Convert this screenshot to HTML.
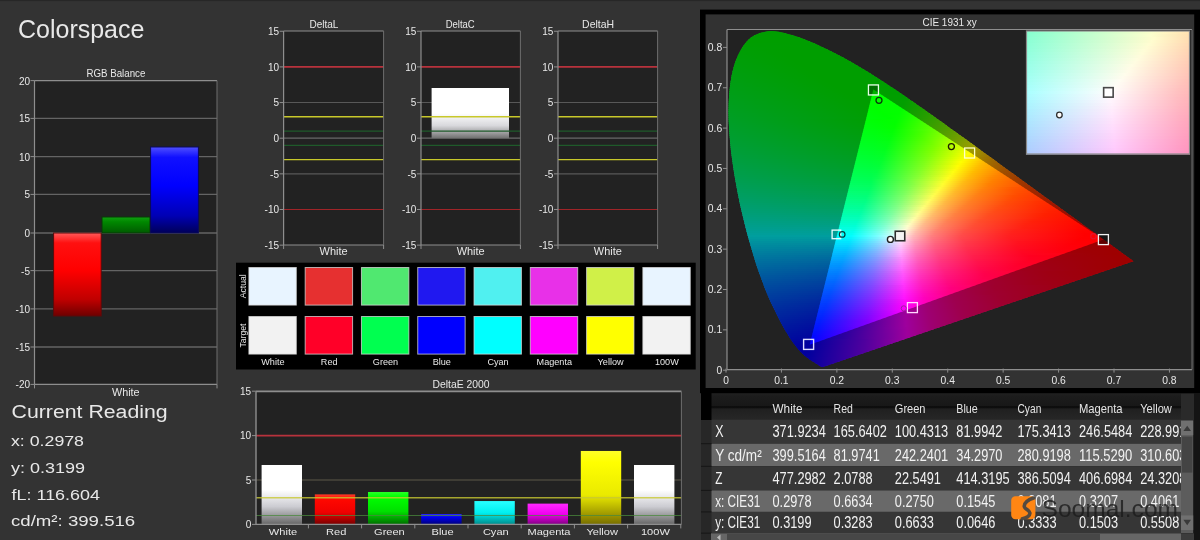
<!DOCTYPE html><html><head><meta charset="utf-8"><title>Colorspace</title><style>html,body{margin:0;padding:0;background:#333;overflow:hidden}svg{display:block;will-change:transform}text{font-family:"Liberation Sans", sans-serif}</style></head><body><svg width="1200" height="540" viewBox="0 0 1200 540"><defs><linearGradient id="gR" x1="0" y1="0" x2="0" y2="1"><stop offset="0" stop-color="#ff5a5a"/><stop offset="0.12" stop-color="#ff1010"/><stop offset="0.45" stop-color="#ff0000"/><stop offset="0.8" stop-color="#c00000"/><stop offset="1" stop-color="#6e0000"/></linearGradient>
<linearGradient id="gG" x1="0" y1="0" x2="0" y2="1"><stop offset="0" stop-color="#10a010"/><stop offset="0.3" stop-color="#008800"/><stop offset="1" stop-color="#005a00"/></linearGradient>
<linearGradient id="gB" x1="0" y1="0" x2="0" y2="1"><stop offset="0" stop-color="#5050ff"/><stop offset="0.12" stop-color="#1010ff"/><stop offset="0.45" stop-color="#0000ff"/><stop offset="0.8" stop-color="#0000b4"/><stop offset="1" stop-color="#000058"/></linearGradient>
<linearGradient id="gW1" x1="0" y1="0" x2="0" y2="1"><stop offset="0" stop-color="#ffffff"/><stop offset="0.5" stop-color="#ffffff"/><stop offset="0.75" stop-color="#d8d8dc"/><stop offset="1" stop-color="#707070"/></linearGradient>
<linearGradient id="gE0" x1="0" y1="0" x2="0" y2="1"><stop offset="0" stop-color="#fff"/><stop offset="0.42" stop-color="#fff"/><stop offset="0.7" stop-color="#ccccd2"/><stop offset="1" stop-color="#666"/></linearGradient>
<linearGradient id="gE1" x1="0" y1="0" x2="0" y2="1"><stop offset="0" stop-color="#ff3c28"/><stop offset="0.15" stop-color="#ff0800"/><stop offset="0.6" stop-color="#f00000"/><stop offset="1" stop-color="#780000"/></linearGradient>
<linearGradient id="gE2" x1="0" y1="0" x2="0" y2="1"><stop offset="0" stop-color="#28ff28"/><stop offset="0.15" stop-color="#00ff00"/><stop offset="0.6" stop-color="#00e000"/><stop offset="1" stop-color="#006e00"/></linearGradient>
<linearGradient id="gE3" x1="0" y1="0" x2="0" y2="1"><stop offset="0" stop-color="#2828ff"/><stop offset="0.3" stop-color="#0000f0"/><stop offset="1" stop-color="#000078"/></linearGradient>
<linearGradient id="gE4" x1="0" y1="0" x2="0" y2="1"><stop offset="0" stop-color="#28ffff"/><stop offset="0.5" stop-color="#00f0f0"/><stop offset="1" stop-color="#008c8c"/></linearGradient>
<linearGradient id="gE5" x1="0" y1="0" x2="0" y2="1"><stop offset="0" stop-color="#ff28ff"/><stop offset="0.5" stop-color="#f000f0"/><stop offset="1" stop-color="#820082"/></linearGradient>
<linearGradient id="gE6" x1="0" y1="0" x2="0" y2="1"><stop offset="0" stop-color="#ffff28"/><stop offset="0.15" stop-color="#ffff00"/><stop offset="0.6" stop-color="#eaea00"/><stop offset="1" stop-color="#786e00"/></linearGradient>
<linearGradient id="gE7" x1="0" y1="0" x2="0" y2="1"><stop offset="0" stop-color="#fff"/><stop offset="0.42" stop-color="#fff"/><stop offset="0.7" stop-color="#ccccd2"/><stop offset="1" stop-color="#666"/></linearGradient>
<clipPath id="cpH"><polygon points="823.0,367.0 822.2,367.1 821.4,366.9 820.6,366.5 819.8,366.0 819.0,365.5 818.4,365.1 817.7,364.6 816.8,364.0 816.2,363.6 815.5,363.2 814.7,362.7 813.8,362.1 812.9,361.5 811.9,360.9 810.8,360.2 809.6,359.4 809.0,359.0 808.4,358.5 807.7,358.0 807.1,357.5 806.3,357.0 805.6,356.4 804.9,355.8 804.1,355.2 803.4,354.5 802.5,353.7 801.6,352.8 800.7,351.9 799.7,350.8 798.7,349.7 797.6,348.5 796.5,347.1 795.3,345.6 794.1,344.0 792.8,342.3 791.5,340.4 790.2,338.4 788.8,336.3 787.3,333.8 785.7,331.2 784.1,328.5 782.5,325.5 780.8,322.4 779.0,319.0 777.1,315.3 775.2,311.3 773.1,307.1 771.0,302.7 768.9,298.0 766.7,293.0 764.6,287.7 762.5,282.1 760.3,276.1 758.1,269.9 755.9,263.4 753.8,256.6 751.7,249.5 749.6,242.2 747.4,234.5 745.3,226.5 743.3,218.3 741.3,210.1 739.5,201.9 737.8,193.5 736.2,185.0 734.7,176.4 733.3,167.8 732.1,159.3 731.0,150.9 730.2,142.8 729.5,134.6 729.0,126.6 728.6,118.8 728.5,111.1 728.7,103.8 729.0,96.7 729.6,89.8 730.4,83.1 731.4,76.7 732.7,70.7 734.2,65.2 736.0,60.0 738.0,55.2 740.3,50.8 742.7,46.8 745.3,43.2 748.1,40.1 751.0,37.6 754.1,35.6 757.4,34.0 760.8,32.8 764.2,31.9 767.7,31.3 771.2,31.1 774.9,31.3 778.6,31.8 782.3,32.5 786.1,33.4 789.8,34.4 793.6,35.4 797.3,36.7 801.1,38.1 804.9,39.6 808.6,41.1 812.3,42.6 815.9,44.1 819.5,45.7 823.0,47.4 826.5,49.0 830.0,50.7 833.5,52.5 836.9,54.2 840.3,56.0 843.7,57.8 847.1,59.7 850.4,61.6 853.8,63.5 857.2,65.5 860.5,67.4 863.9,69.5 867.2,71.5 870.6,73.6 873.9,75.7 877.2,77.8 880.5,79.9 883.8,82.1 887.1,84.2 890.4,86.4 893.7,88.6 897.0,90.8 900.3,93.1 903.6,95.3 906.9,97.6 910.2,99.9 913.5,102.1 916.8,104.4 920.1,106.8 923.5,109.1 926.8,111.4 930.1,113.7 933.4,116.1 936.7,118.4 940.0,120.8 943.3,123.1 946.6,125.5 949.8,127.9 953.1,130.2 956.4,132.6 959.7,134.9 963.0,137.3 966.2,139.6 969.5,142.0 972.8,144.3 976.0,146.7 979.2,149.0 982.4,151.4 985.6,153.7 988.8,156.0 992.0,158.3 995.2,160.6 998.3,162.9 1001.4,165.2 1004.5,167.4 1007.6,169.7 1010.7,171.9 1013.7,174.1 1016.7,176.3 1019.8,178.5 1022.7,180.7 1025.7,182.8 1028.6,185.0 1031.5,187.1 1034.3,189.1 1037.2,191.2 1040.0,193.2 1042.7,195.2 1045.4,197.2 1048.1,199.1 1050.8,201.1 1053.3,203.0 1055.9,204.8 1058.4,206.6 1060.8,208.4 1063.2,210.1 1065.5,211.8 1067.7,213.4 1069.9,215.0 1072.1,216.6 1074.2,218.1 1076.2,219.6 1078.3,221.1 1080.3,222.6 1082.2,224.0 1084.1,225.4 1085.9,226.7 1087.7,228.0 1089.4,229.2 1091.0,230.4 1092.6,231.5 1094.2,232.6 1095.7,233.7 1097.1,234.8 1098.5,235.8 1099.9,236.8 1101.2,237.7 1102.4,238.6 1103.6,239.5 1104.8,240.4 1105.9,241.2 1107.0,242.0 1108.0,242.7 1109.0,243.4 1109.9,244.1 1110.9,244.8 1111.8,245.5 1112.6,246.1 1113.4,246.7 1114.2,247.2 1115.0,247.8 1115.7,248.3 1116.4,248.8 1117.1,249.3 1117.8,249.8 1118.4,250.3 1119.0,250.7 1119.6,251.2 1120.2,251.6 1121.4,252.4 1122.4,253.2 1123.4,253.9 1124.3,254.6 1125.2,255.2 1126.0,255.8 1126.7,256.3 1127.4,256.8 1128.2,257.4 1129.1,258.0 1129.8,258.5 1130.5,259.1 1131.3,259.6 1132.0,260.2 1132.6,260.6 1133.4,261.2"/></clipPath>
<clipPath id="cpT"><polygon points="1103.6,239.4 873.4,89.6 809.7,344.7"/></clipPath>
<linearGradient id="c0" gradientUnits="userSpaceOnUse" x1="759" x2="786" y1="0" y2="0"><stop offset="0" stop-color="#0f0"/><stop offset="1" stop-color="#0f0"/></linearGradient>
<linearGradient id="c1" gradientUnits="userSpaceOnUse" x1="754" x2="793" y1="0" y2="0"><stop offset="0" stop-color="#0f0"/><stop offset="1" stop-color="#0f0"/></linearGradient>
<linearGradient id="c2" gradientUnits="userSpaceOnUse" x1="750" x2="800" y1="0" y2="0"><stop offset="0" stop-color="#0f0"/><stop offset="1" stop-color="#0f0"/></linearGradient>
<linearGradient id="c3" gradientUnits="userSpaceOnUse" x1="748" x2="805" y1="0" y2="0"><stop offset="0" stop-color="#0f0"/><stop offset="1" stop-color="#0f0"/></linearGradient>
<linearGradient id="c4" gradientUnits="userSpaceOnUse" x1="746" x2="810" y1="0" y2="0"><stop offset="0" stop-color="#0f0"/><stop offset="1" stop-color="#0f0"/></linearGradient>
<linearGradient id="c5" gradientUnits="userSpaceOnUse" x1="744" x2="815" y1="0" y2="0"><stop offset="0" stop-color="#00ff01"/><stop offset="1" stop-color="#0f0"/></linearGradient>
<linearGradient id="c6" gradientUnits="userSpaceOnUse" x1="743" x2="819" y1="0" y2="0"><stop offset="0" stop-color="#00ff03"/><stop offset="1" stop-color="#0f0"/></linearGradient>
<linearGradient id="c7" gradientUnits="userSpaceOnUse" x1="741" x2="824" y1="0" y2="0"><stop offset="0" stop-color="#00ff04"/><stop offset="1" stop-color="#0f0"/></linearGradient>
<linearGradient id="c8" gradientUnits="userSpaceOnUse" x1="740" x2="828" y1="0" y2="0"><stop offset="0" stop-color="#00ff06"/><stop offset="0.705" stop-color="#0f0"/><stop offset="1" stop-color="#0f0"/></linearGradient>
<linearGradient id="c9" gradientUnits="userSpaceOnUse" x1="739" x2="832" y1="0" y2="0"><stop offset="0" stop-color="#00ff07"/><stop offset="0.548" stop-color="#0f0"/><stop offset="1" stop-color="#0f0"/></linearGradient>
<linearGradient id="c10" gradientUnits="userSpaceOnUse" x1="738" x2="836" y1="0" y2="0"><stop offset="0" stop-color="#00ff09"/><stop offset="0.52" stop-color="#0f0"/><stop offset="1" stop-color="#0f0"/></linearGradient>
<linearGradient id="c11" gradientUnits="userSpaceOnUse" x1="737" x2="840" y1="0" y2="0"><stop offset="0" stop-color="#00ff0a"/><stop offset="0.515" stop-color="#0f0"/><stop offset="1" stop-color="#0f0"/></linearGradient>
<linearGradient id="c12" gradientUnits="userSpaceOnUse" x1="736" x2="844" y1="0" y2="0"><stop offset="0" stop-color="#00ff0c"/><stop offset="0.509" stop-color="#0f0"/><stop offset="1" stop-color="#0f0"/></linearGradient>
<linearGradient id="c13" gradientUnits="userSpaceOnUse" x1="735" x2="847" y1="0" y2="0"><stop offset="0" stop-color="#00ff0d"/><stop offset="0.527" stop-color="#0f0"/><stop offset="1" stop-color="#0f0"/></linearGradient>
<linearGradient id="c14" gradientUnits="userSpaceOnUse" x1="734" x2="851" y1="0" y2="0"><stop offset="0" stop-color="#00ff0f"/><stop offset="0.53" stop-color="#0f0"/><stop offset="1" stop-color="#0f0"/></linearGradient>
<linearGradient id="c15" gradientUnits="userSpaceOnUse" x1="733" x2="854" y1="0" y2="0"><stop offset="0" stop-color="#00ff10"/><stop offset="0.545" stop-color="#0f0"/><stop offset="1" stop-color="#0f0"/></linearGradient>
<linearGradient id="c16" gradientUnits="userSpaceOnUse" x1="733" x2="858" y1="0" y2="0"><stop offset="0" stop-color="#0f1"/><stop offset="0.544" stop-color="#0f0"/><stop offset="1" stop-color="#0f0"/></linearGradient>
<linearGradient id="c17" gradientUnits="userSpaceOnUse" x1="732" x2="861" y1="0" y2="0"><stop offset="0" stop-color="#00ff13"/><stop offset="0.566" stop-color="#0f0"/><stop offset="1" stop-color="#0f0"/></linearGradient>
<linearGradient id="c18" gradientUnits="userSpaceOnUse" x1="732" x2="865" y1="0" y2="0"><stop offset="0" stop-color="#00ff14"/><stop offset="0.571" stop-color="#0f0"/><stop offset="1" stop-color="#0f0"/></linearGradient>
<linearGradient id="c19" gradientUnits="userSpaceOnUse" x1="731" x2="868" y1="0" y2="0"><stop offset="0" stop-color="#00ff16"/><stop offset="0.584" stop-color="#0f0"/><stop offset="1" stop-color="#0f0"/></linearGradient>
<linearGradient id="c20" gradientUnits="userSpaceOnUse" x1="731" x2="871" y1="0" y2="0"><stop offset="0" stop-color="#00ff17"/><stop offset="0.593" stop-color="#0f0"/><stop offset="1" stop-color="#0f0"/></linearGradient>
<linearGradient id="c21" gradientUnits="userSpaceOnUse" x1="730" x2="874" y1="0" y2="0"><stop offset="0" stop-color="#00ff19"/><stop offset="0.604" stop-color="#0f0"/><stop offset="1" stop-color="#0f0"/></linearGradient>
<linearGradient id="c22" gradientUnits="userSpaceOnUse" x1="730" x2="877" y1="0" y2="0"><stop offset="0" stop-color="#00ff1a"/><stop offset="0.612" stop-color="#0f0"/><stop offset="1" stop-color="#0f0"/></linearGradient>
<linearGradient id="c23" gradientUnits="userSpaceOnUse" x1="730" x2="881" y1="0" y2="0"><stop offset="0" stop-color="#00ff1b"/><stop offset="0.616" stop-color="#0f0"/><stop offset="1" stop-color="#0f0"/></linearGradient>
<linearGradient id="c24" gradientUnits="userSpaceOnUse" x1="729" x2="884" y1="0" y2="0"><stop offset="0" stop-color="#00ff1d"/><stop offset="0.632" stop-color="#0f0"/><stop offset="1" stop-color="#0f0"/></linearGradient>
<linearGradient id="c25" gradientUnits="userSpaceOnUse" x1="729" x2="887" y1="0" y2="0"><stop offset="0" stop-color="#00ff1e"/><stop offset="0.639" stop-color="#0f0"/><stop offset="1" stop-color="#0f0"/></linearGradient>
<linearGradient id="c26" gradientUnits="userSpaceOnUse" x1="729" x2="890" y1="0" y2="0"><stop offset="0" stop-color="#00ff20"/><stop offset="0.646" stop-color="#0f0"/><stop offset="1" stop-color="#0f0"/></linearGradient>
<linearGradient id="c27" gradientUnits="userSpaceOnUse" x1="728" x2="893" y1="0" y2="0"><stop offset="0" stop-color="#00ff21"/><stop offset="0.661" stop-color="#0f0"/><stop offset="1" stop-color="#0f0"/></linearGradient>
<linearGradient id="c28" gradientUnits="userSpaceOnUse" x1="728" x2="896" y1="0" y2="0"><stop offset="0" stop-color="#00ff23"/><stop offset="0.667" stop-color="#0f0"/><stop offset="1" stop-color="#0f0"/></linearGradient>
<linearGradient id="c29" gradientUnits="userSpaceOnUse" x1="728" x2="899" y1="0" y2="0"><stop offset="0" stop-color="#00ff24"/><stop offset="0.673" stop-color="#0f0"/><stop offset="1" stop-color="#0f0"/></linearGradient>
<linearGradient id="c30" gradientUnits="userSpaceOnUse" x1="728" x2="902" y1="0" y2="0"><stop offset="0" stop-color="#00ff26"/><stop offset="0.678" stop-color="#0f0"/><stop offset="1" stop-color="#0f0"/></linearGradient>
<linearGradient id="c31" gradientUnits="userSpaceOnUse" x1="728" x2="905" y1="0" y2="0"><stop offset="0" stop-color="#00ff27"/><stop offset="0.689" stop-color="#0f0"/><stop offset="1" stop-color="#0f0"/></linearGradient>
<linearGradient id="c32" gradientUnits="userSpaceOnUse" x1="728" x2="908" y1="0" y2="0"><stop offset="0" stop-color="#00ff29"/><stop offset="0.694" stop-color="#0f0"/><stop offset="0.989" stop-color="#03ff00"/><stop offset="1" stop-color="#07ff00"/></linearGradient>
<linearGradient id="c33" gradientUnits="userSpaceOnUse" x1="728" x2="910" y1="0" y2="0"><stop offset="0" stop-color="#00ff2a"/><stop offset="0.703" stop-color="#0f0"/><stop offset="0.973" stop-color="#03ff00"/><stop offset="1" stop-color="#0cff00"/></linearGradient>
<linearGradient id="c34" gradientUnits="userSpaceOnUse" x1="728" x2="913" y1="0" y2="0"><stop offset="0" stop-color="#00ff2c"/><stop offset="0.714" stop-color="#0f0"/><stop offset="0.957" stop-color="#04ff00"/><stop offset="1" stop-color="#13ff00"/></linearGradient>
<linearGradient id="c35" gradientUnits="userSpaceOnUse" x1="728" x2="916" y1="0" y2="0"><stop offset="0" stop-color="#00ff2e"/><stop offset="0.718" stop-color="#0f0"/><stop offset="0.936" stop-color="#04ff00"/><stop offset="1" stop-color="#1bff00"/></linearGradient>
<linearGradient id="c36" gradientUnits="userSpaceOnUse" x1="728" x2="919" y1="0" y2="0"><stop offset="0" stop-color="#00ff2f"/><stop offset="0.723" stop-color="#0f0"/><stop offset="0.916" stop-color="#03ff00"/><stop offset="1" stop-color="#2f0"/></linearGradient>
<linearGradient id="c37" gradientUnits="userSpaceOnUse" x1="728" x2="922" y1="0" y2="0"><stop offset="0" stop-color="#00ff31"/><stop offset="0.732" stop-color="#0f0"/><stop offset="0.897" stop-color="#03ff00"/><stop offset="1" stop-color="#2aff00"/></linearGradient>
<linearGradient id="c38" gradientUnits="userSpaceOnUse" x1="728" x2="925" y1="0" y2="0"><stop offset="0" stop-color="#00ff32"/><stop offset="0.736" stop-color="#0f0"/><stop offset="0.883" stop-color="#04ff00"/><stop offset="1" stop-color="#32ff00"/></linearGradient>
<linearGradient id="c39" gradientUnits="userSpaceOnUse" x1="728" x2="928" y1="0" y2="0"><stop offset="0" stop-color="#00ff34"/><stop offset="0.74" stop-color="#0f0"/><stop offset="0.865" stop-color="#04ff00"/><stop offset="1" stop-color="#3bff00"/></linearGradient>
<linearGradient id="c40" gradientUnits="userSpaceOnUse" x1="728" x2="931" y1="0" y2="0"><stop offset="0" stop-color="#00ff36"/><stop offset="0.749" stop-color="#0f0"/><stop offset="0.847" stop-color="#04ff00"/><stop offset="1" stop-color="#4f0"/></linearGradient>
<linearGradient id="c41" gradientUnits="userSpaceOnUse" x1="728" x2="933" y1="0" y2="0"><stop offset="0" stop-color="#00ff38"/><stop offset="0.756" stop-color="#0f0"/><stop offset="0.834" stop-color="#03ff00"/><stop offset="1" stop-color="#4bff00"/></linearGradient>
<linearGradient id="c42" gradientUnits="userSpaceOnUse" x1="728" x2="936" y1="0" y2="0"><stop offset="0" stop-color="#00ff39"/><stop offset="0.76" stop-color="#0f0"/><stop offset="0.822" stop-color="#05ff00"/><stop offset="1" stop-color="#54ff00"/></linearGradient>
<linearGradient id="c43" gradientUnits="userSpaceOnUse" x1="728" x2="939" y1="0" y2="0"><stop offset="0" stop-color="#00ff3b"/><stop offset="0.768" stop-color="#0f0"/><stop offset="0.81" stop-color="#06ff00"/><stop offset="1" stop-color="#5eff00"/></linearGradient>
<linearGradient id="c44" gradientUnits="userSpaceOnUse" x1="728" x2="942" y1="0" y2="0"><stop offset="0" stop-color="#00ff3d"/><stop offset="0.706" stop-color="#00ff02"/><stop offset="0.79" stop-color="#04ff00"/><stop offset="1" stop-color="#68ff00"/></linearGradient>
<linearGradient id="c45" gradientUnits="userSpaceOnUse" x1="728" x2="945" y1="0" y2="0"><stop offset="0" stop-color="#00ff3f"/><stop offset="0.691" stop-color="#00ff04"/><stop offset="0.774" stop-color="#03ff00"/><stop offset="1" stop-color="#72ff00"/></linearGradient>
<linearGradient id="c46" gradientUnits="userSpaceOnUse" x1="728" x2="947" y1="0" y2="0"><stop offset="0" stop-color="#00ff41"/><stop offset="0.685" stop-color="#00ff06"/><stop offset="0.763" stop-color="#03ff00"/><stop offset="1" stop-color="#7bff00"/></linearGradient>
<linearGradient id="c47" gradientUnits="userSpaceOnUse" x1="728" x2="950" y1="0" y2="0"><stop offset="0" stop-color="#00ff43"/><stop offset="0.671" stop-color="#00ff08"/><stop offset="0.752" stop-color="#04ff00"/><stop offset="0.995" stop-color="#83ff00"/><stop offset="1" stop-color="#86ff00"/></linearGradient>
<linearGradient id="c48" gradientUnits="userSpaceOnUse" x1="728" x2="953" y1="0" y2="0"><stop offset="0" stop-color="#00ff45"/><stop offset="0.662" stop-color="#00ff0a"/><stop offset="0.738" stop-color="#04ff01"/><stop offset="0.973" stop-color="#81ff00"/><stop offset="1" stop-color="#91ff00"/></linearGradient>
<linearGradient id="c49" gradientUnits="userSpaceOnUse" x1="728" x2="956" y1="0" y2="0"><stop offset="0" stop-color="#00ff47"/><stop offset="0.649" stop-color="#00ff0d"/><stop offset="0.724" stop-color="#04ff04"/><stop offset="0.956" stop-color="#82ff00"/><stop offset="1" stop-color="#9eff00"/></linearGradient>
<linearGradient id="c50" gradientUnits="userSpaceOnUse" x1="728" x2="958" y1="0" y2="0"><stop offset="0" stop-color="#00ff49"/><stop offset="0.643" stop-color="#00ff0f"/><stop offset="0.713" stop-color="#03ff06"/><stop offset="0.848" stop-color="#4aff00"/><stop offset="1" stop-color="#a7ff00"/></linearGradient>
<linearGradient id="c51" gradientUnits="userSpaceOnUse" x1="728" x2="961" y1="0" y2="0"><stop offset="0" stop-color="#00ff4b"/><stop offset="0.631" stop-color="#0f1"/><stop offset="0.704" stop-color="#05ff08"/><stop offset="0.824" stop-color="#45ff00"/><stop offset="1" stop-color="#b4ff00"/></linearGradient>
<linearGradient id="c52" gradientUnits="userSpaceOnUse" x1="728" x2="964" y1="0" y2="0"><stop offset="0" stop-color="#00ff4d"/><stop offset="0.619" stop-color="#00ff14"/><stop offset="0.691" stop-color="#04ff0b"/><stop offset="0.818" stop-color="#4aff00"/><stop offset="1" stop-color="#c2ff00"/></linearGradient>
<linearGradient id="c53" gradientUnits="userSpaceOnUse" x1="728" x2="967" y1="0" y2="0"><stop offset="0" stop-color="#00ff4f"/><stop offset="0.611" stop-color="#00ff16"/><stop offset="0.678" stop-color="#04ff0e"/><stop offset="0.816" stop-color="#52ff00"/><stop offset="1" stop-color="#d0ff00"/></linearGradient>
<linearGradient id="c54" gradientUnits="userSpaceOnUse" x1="728" x2="970" y1="0" y2="0"><stop offset="0" stop-color="#00ff51"/><stop offset="0.599" stop-color="#00ff19"/><stop offset="0.665" stop-color="#03ff10"/><stop offset="0.814" stop-color="#5aff00"/><stop offset="0.996" stop-color="#dcff00"/><stop offset="1" stop-color="#dfff00"/></linearGradient>
<linearGradient id="c55" gradientUnits="userSpaceOnUse" x1="729" x2="972" y1="0" y2="0"><stop offset="0" stop-color="#00ff53"/><stop offset="0.597" stop-color="#00ff1b"/><stop offset="0.658" stop-color="#05ff13"/><stop offset="0.823" stop-color="#68ff00"/><stop offset="1" stop-color="#ecff00"/></linearGradient>
<linearGradient id="c56" gradientUnits="userSpaceOnUse" x1="729" x2="975" y1="0" y2="0"><stop offset="0" stop-color="#0f5"/><stop offset="0.585" stop-color="#00ff1e"/><stop offset="0.646" stop-color="#04ff16"/><stop offset="0.825" stop-color="#73ff00"/><stop offset="0.996" stop-color="#f8ff00"/><stop offset="1" stop-color="#fcff00"/></linearGradient>
<linearGradient id="c57" gradientUnits="userSpaceOnUse" x1="729" x2="978" y1="0" y2="0"><stop offset="0" stop-color="#00ff57"/><stop offset="0.578" stop-color="#00ff20"/><stop offset="0.635" stop-color="#04ff18"/><stop offset="0.827" stop-color="#7fff00"/><stop offset="0.988" stop-color="#fffc00"/><stop offset="1" stop-color="#fff200"/></linearGradient>
<linearGradient id="c58" gradientUnits="userSpaceOnUse" x1="729" x2="981" y1="0" y2="0"><stop offset="0" stop-color="#00ff5a"/><stop offset="0.567" stop-color="#00ff23"/><stop offset="0.623" stop-color="#03ff1b"/><stop offset="0.813" stop-color="#80ff00"/><stop offset="0.968" stop-color="#fffd00"/><stop offset="1" stop-color="#ffe300"/></linearGradient>
<linearGradient id="c59" gradientUnits="userSpaceOnUse" x1="729" x2="983" y1="0" y2="0"><stop offset="0" stop-color="#00ff5c"/><stop offset="0.563" stop-color="#00ff25"/><stop offset="0.614" stop-color="#03ff1e"/><stop offset="0.803" stop-color="#81ff01"/><stop offset="0.957" stop-color="#fffb00"/><stop offset="1" stop-color="#ffd800"/></linearGradient>
<linearGradient id="c60" gradientUnits="userSpaceOnUse" x1="730" x2="986" y1="0" y2="0"><stop offset="0" stop-color="#00ff5e"/><stop offset="0.555" stop-color="#00ff28"/><stop offset="0.605" stop-color="#05ff21"/><stop offset="0.789" stop-color="#82ff04"/><stop offset="0.938" stop-color="#fffc00"/><stop offset="1" stop-color="#ffca00"/></linearGradient>
<linearGradient id="c61" gradientUnits="userSpaceOnUse" x1="730" x2="989" y1="0" y2="0"><stop offset="0" stop-color="#00ff60"/><stop offset="0.548" stop-color="#00ff2a"/><stop offset="0.595" stop-color="#04ff24"/><stop offset="0.776" stop-color="#83ff07"/><stop offset="0.861" stop-color="#caff00"/><stop offset="0.919" stop-color="#fffe00"/><stop offset="1" stop-color="#ffbe00"/></linearGradient>
<linearGradient id="c62" gradientUnits="userSpaceOnUse" x1="730" x2="992" y1="0" y2="0"><stop offset="0" stop-color="#00ff63"/><stop offset="0.538" stop-color="#00ff2e"/><stop offset="0.584" stop-color="#04ff27"/><stop offset="0.76" stop-color="#80ff0b"/><stop offset="0.851" stop-color="#cfff00"/><stop offset="0.905" stop-color="#fffb00"/><stop offset="0.989" stop-color="#ffba00"/><stop offset="1" stop-color="#ffb300"/></linearGradient>
<linearGradient id="c63" gradientUnits="userSpaceOnUse" x1="730" x2="994" y1="0" y2="0"><stop offset="0" stop-color="#00ff65"/><stop offset="0.534" stop-color="#00ff30"/><stop offset="0.576" stop-color="#03ff2b"/><stop offset="0.75" stop-color="#81ff0f"/><stop offset="0.852" stop-color="#dcff00"/><stop offset="0.89" stop-color="#fffc00"/><stop offset="0.973" stop-color="#ffba00"/><stop offset="1" stop-color="#fa0"/></linearGradient>
<linearGradient id="c64" gradientUnits="userSpaceOnUse" x1="731" x2="997" y1="0" y2="0"><stop offset="0" stop-color="#00ff68"/><stop offset="0.526" stop-color="#0f3"/><stop offset="0.568" stop-color="#05ff2d"/><stop offset="0.737" stop-color="#82ff12"/><stop offset="0.853" stop-color="#edff00"/><stop offset="0.876" stop-color="#fffa00"/><stop offset="0.959" stop-color="#ffb800"/><stop offset="1" stop-color="#ffa000"/></linearGradient>
<linearGradient id="c65" gradientUnits="userSpaceOnUse" x1="731" x2="1000" y1="0" y2="0"><stop offset="0" stop-color="#00ff6a"/><stop offset="0.52" stop-color="#00ff36"/><stop offset="0.558" stop-color="#05ff31"/><stop offset="0.725" stop-color="#83ff16"/><stop offset="0.855" stop-color="#ff0"/><stop offset="0.933" stop-color="#ffbd00"/><stop offset="1" stop-color="#ff9600"/></linearGradient>
<linearGradient id="c66" gradientUnits="userSpaceOnUse" x1="731" x2="1003" y1="0" y2="0"><stop offset="0" stop-color="#00ff6d"/><stop offset="0.515" stop-color="#00ff39"/><stop offset="0.548" stop-color="#04ff34"/><stop offset="0.71" stop-color="#81ff1a"/><stop offset="0.842" stop-color="#fffc00"/><stop offset="0.919" stop-color="#fb0"/><stop offset="1" stop-color="#ff8d00"/></linearGradient>
<linearGradient id="c67" gradientUnits="userSpaceOnUse" x1="731" x2="1005" y1="0" y2="0"><stop offset="0" stop-color="#00ff70"/><stop offset="0.507" stop-color="#00ff3c"/><stop offset="0.54" stop-color="#03ff38"/><stop offset="0.701" stop-color="#81ff1e"/><stop offset="0.828" stop-color="#fffe03"/><stop offset="0.905" stop-color="#fb0"/><stop offset="1" stop-color="#ff8700"/></linearGradient>
<linearGradient id="c68" gradientUnits="userSpaceOnUse" x1="732" x2="1008" y1="0" y2="0"><stop offset="0" stop-color="#00ff72"/><stop offset="0.504" stop-color="#00ff3f"/><stop offset="0.533" stop-color="#05ff3b"/><stop offset="0.688" stop-color="#82ff21"/><stop offset="0.815" stop-color="#fffb07"/><stop offset="0.884" stop-color="#ffbe00"/><stop offset="0.993" stop-color="#ff8200"/><stop offset="1" stop-color="#ff7f00"/></linearGradient>
<linearGradient id="c69" gradientUnits="userSpaceOnUse" x1="732" x2="1011" y1="0" y2="0"><stop offset="0" stop-color="#00ff75"/><stop offset="0.495" stop-color="#00ff43"/><stop offset="0.523" stop-color="#05ff3f"/><stop offset="0.677" stop-color="#83ff25"/><stop offset="0.799" stop-color="#fffc0c"/><stop offset="0.875" stop-color="#ffb900"/><stop offset="0.982" stop-color="#ff7e00"/><stop offset="1" stop-color="#f70"/></linearGradient>
<linearGradient id="c70" gradientUnits="userSpaceOnUse" x1="732" x2="1014" y1="0" y2="0"><stop offset="0" stop-color="#00ff78"/><stop offset="0.489" stop-color="#00ff46"/><stop offset="0.514" stop-color="#04ff42"/><stop offset="0.663" stop-color="#81ff2a"/><stop offset="0.784" stop-color="#fffe11"/><stop offset="0.855" stop-color="#ffbc00"/><stop offset="0.957" stop-color="#ff8100"/><stop offset="1" stop-color="#ff7000"/></linearGradient>
<linearGradient id="c71" gradientUnits="userSpaceOnUse" x1="733" x2="1016" y1="0" y2="0"><stop offset="0" stop-color="#00ff7a"/><stop offset="0.488" stop-color="#00ff49"/><stop offset="0.509" stop-color="#06ff46"/><stop offset="0.657" stop-color="#85ff2d"/><stop offset="0.774" stop-color="#fffb15"/><stop offset="0.845" stop-color="#ffb903"/><stop offset="0.947" stop-color="#ff7f00"/><stop offset="1" stop-color="#ff6a00"/></linearGradient>
<linearGradient id="c72" gradientUnits="userSpaceOnUse" x1="733" x2="1019" y1="0" y2="0"><stop offset="0" stop-color="#00ff7d"/><stop offset="0.483" stop-color="#00ff4c"/><stop offset="0.503" stop-color="#08ff49"/><stop offset="0.647" stop-color="#86ff32"/><stop offset="0.759" stop-color="#fffc1a"/><stop offset="0.829" stop-color="#ffba06"/><stop offset="0.913" stop-color="#ff8700"/><stop offset="1" stop-color="#ff6400"/></linearGradient>
<linearGradient id="c73" gradientUnits="userSpaceOnUse" x1="733" x2="1022" y1="0" y2="0"><stop offset="0" stop-color="#00ff80"/><stop offset="0.478" stop-color="#00ff50"/><stop offset="0.502" stop-color="#0dff4c"/><stop offset="0.64" stop-color="#8bff35"/><stop offset="0.744" stop-color="#fffe1f"/><stop offset="0.81" stop-color="#ffbd0b"/><stop offset="0.893" stop-color="#f80"/><stop offset="1" stop-color="#ff5d00"/></linearGradient>
<linearGradient id="c74" gradientUnits="userSpaceOnUse" x1="734" x2="1025" y1="0" y2="0"><stop offset="0" stop-color="#00ff83"/><stop offset="0.471" stop-color="#00ff53"/><stop offset="0.567" stop-color="#4fff45"/><stop offset="0.691" stop-color="#d0ff2d"/><stop offset="0.732" stop-color="#fffb24"/><stop offset="0.801" stop-color="#ffb70e"/><stop offset="0.89" stop-color="#ff8100"/><stop offset="1" stop-color="#ff5800"/></linearGradient>
<linearGradient id="c75" gradientUnits="userSpaceOnUse" x1="734" x2="1027" y1="0" y2="0"><stop offset="0" stop-color="#00ff86"/><stop offset="0.468" stop-color="#00ff57"/><stop offset="0.59" stop-color="#6dff44"/><stop offset="0.706" stop-color="#f0ff2d"/><stop offset="0.72" stop-color="#fffc29"/><stop offset="0.785" stop-color="#ffba13"/><stop offset="0.881" stop-color="#ff7f00"/><stop offset="1" stop-color="#ff5300"/></linearGradient>
<linearGradient id="c76" gradientUnits="userSpaceOnUse" x1="734" x2="1030" y1="0" y2="0"><stop offset="0" stop-color="#00ff8a"/><stop offset="0.463" stop-color="#01ff5b"/><stop offset="0.598" stop-color="#7fff45"/><stop offset="0.706" stop-color="#fffe2f"/><stop offset="0.77" stop-color="#ffbb17"/><stop offset="0.861" stop-color="#ff8002"/><stop offset="1" stop-color="#ff4e00"/></linearGradient>
<linearGradient id="c77" gradientUnits="userSpaceOnUse" x1="735" x2="1033" y1="0" y2="0"><stop offset="0" stop-color="#00ff8d"/><stop offset="0.456" stop-color="#03ff5f"/><stop offset="0.587" stop-color="#80ff4a"/><stop offset="0.695" stop-color="#fffb34"/><stop offset="0.758" stop-color="#ffb81b"/><stop offset="0.852" stop-color="#ff7d04"/><stop offset="0.997" stop-color="#ff4900"/><stop offset="1" stop-color="#ff4800"/></linearGradient>
<linearGradient id="c78" gradientUnits="userSpaceOnUse" x1="735" x2="1036" y1="0" y2="0"><stop offset="0" stop-color="#00ff90"/><stop offset="0.449" stop-color="#02ff64"/><stop offset="0.575" stop-color="#7eff50"/><stop offset="0.681" stop-color="#fffc3a"/><stop offset="0.741" stop-color="#ffbb20"/><stop offset="0.831" stop-color="#ff8009"/><stop offset="0.92" stop-color="#ff5a00"/><stop offset="1" stop-color="#ff4300"/></linearGradient>
<linearGradient id="c79" gradientUnits="userSpaceOnUse" x1="735" x2="1038" y1="0" y2="0"><stop offset="0" stop-color="#00ff94"/><stop offset="0.442" stop-color="#01ff68"/><stop offset="0.568" stop-color="#7eff55"/><stop offset="0.67" stop-color="#fffe40"/><stop offset="0.729" stop-color="#ffbc25"/><stop offset="0.815" stop-color="#ff810d"/><stop offset="0.914" stop-color="#ff5700"/><stop offset="1" stop-color="#ff3f00"/></linearGradient>
<linearGradient id="c80" gradientUnits="userSpaceOnUse" x1="736" x2="1041" y1="0" y2="0"><stop offset="0" stop-color="#00ff97"/><stop offset="0.436" stop-color="#04ff6d"/><stop offset="0.557" stop-color="#7fff5a"/><stop offset="0.659" stop-color="#fffb45"/><stop offset="0.718" stop-color="#ffb928"/><stop offset="0.803" stop-color="#ff7f0f"/><stop offset="0.915" stop-color="#ff5200"/><stop offset="1" stop-color="#ff3b00"/></linearGradient>
<linearGradient id="c81" gradientUnits="userSpaceOnUse" x1="736" x2="1044" y1="0" y2="0"><stop offset="0" stop-color="#00ff9b"/><stop offset="0.429" stop-color="#03ff72"/><stop offset="0.549" stop-color="#80ff5f"/><stop offset="0.646" stop-color="#fffd4b"/><stop offset="0.705" stop-color="#ffb92d"/><stop offset="0.789" stop-color="#ff7e13"/><stop offset="0.916" stop-color="#ff4c00"/><stop offset="1" stop-color="#ff3700"/></linearGradient>
<linearGradient id="c82" gradientUnits="userSpaceOnUse" x1="737" x2="1047" y1="0" y2="0"><stop offset="0" stop-color="#00ff9e"/><stop offset="0.419" stop-color="#02ff77"/><stop offset="0.535" stop-color="#7eff65"/><stop offset="0.632" stop-color="#fffe52"/><stop offset="0.687" stop-color="#ffbd34"/><stop offset="0.768" stop-color="#ff8118"/><stop offset="0.89" stop-color="#ff4e00"/><stop offset="1" stop-color="#ff3200"/></linearGradient>
<linearGradient id="c83" gradientUnits="userSpaceOnUse" x1="737" x2="1049" y1="0" y2="0"><stop offset="0" stop-color="#00ffa2"/><stop offset="0.413" stop-color="#02ff7c"/><stop offset="0.529" stop-color="#7fff6b"/><stop offset="0.625" stop-color="#fffb57"/><stop offset="0.679" stop-color="#ffba38"/><stop offset="0.76" stop-color="#ff7f1b"/><stop offset="0.885" stop-color="#ff4b02"/><stop offset="1" stop-color="#ff2f00"/></linearGradient>
<linearGradient id="c84" gradientUnits="userSpaceOnUse" x1="737" x2="1052" y1="0" y2="0"><stop offset="0" stop-color="#00ffa6"/><stop offset="0.41" stop-color="#04ff81"/><stop offset="0.521" stop-color="#80ff70"/><stop offset="0.613" stop-color="#fffd5f"/><stop offset="0.667" stop-color="#ffba3d"/><stop offset="0.746" stop-color="#ff7f1f"/><stop offset="0.867" stop-color="#ff4c05"/><stop offset="1" stop-color="#ff2b00"/></linearGradient>
<linearGradient id="c85" gradientUnits="userSpaceOnUse" x1="738" x2="1055" y1="0" y2="0"><stop offset="0" stop-color="#00ffa9"/><stop offset="0.401" stop-color="#03ff86"/><stop offset="0.511" stop-color="#81ff76"/><stop offset="0.599" stop-color="#fffe66"/><stop offset="0.653" stop-color="#ffba42"/><stop offset="0.729" stop-color="#ff8024"/><stop offset="0.845" stop-color="#ff4d09"/><stop offset="0.95" stop-color="#ff3100"/><stop offset="1" stop-color="#ff2700"/></linearGradient>
<linearGradient id="c86" gradientUnits="userSpaceOnUse" x1="738" x2="1058" y1="0" y2="0"><stop offset="0" stop-color="#00ffae"/><stop offset="0.394" stop-color="#03ff8c"/><stop offset="0.5" stop-color="#7eff7d"/><stop offset="0.591" stop-color="#fffb6b"/><stop offset="0.644" stop-color="#ffb846"/><stop offset="0.719" stop-color="#ff7e27"/><stop offset="0.838" stop-color="#ff4a0a"/><stop offset="0.947" stop-color="#ff2e00"/><stop offset="1" stop-color="#ff2400"/></linearGradient>
<linearGradient id="c87" gradientUnits="userSpaceOnUse" x1="739" x2="1060" y1="0" y2="0"><stop offset="0" stop-color="#00ffb2"/><stop offset="0.386" stop-color="#02ff92"/><stop offset="0.492" stop-color="#7fff83"/><stop offset="0.579" stop-color="#fffd73"/><stop offset="0.629" stop-color="#ffbb4e"/><stop offset="0.704" stop-color="#ff7f2c"/><stop offset="0.819" stop-color="#ff4b0e"/><stop offset="0.944" stop-color="#ff2b00"/><stop offset="1" stop-color="#ff2100"/></linearGradient>
<linearGradient id="c88" gradientUnits="userSpaceOnUse" x1="739" x2="1063" y1="0" y2="0"><stop offset="0" stop-color="#00ffb6"/><stop offset="0.38" stop-color="#01ff97"/><stop offset="0.485" stop-color="#80ff8a"/><stop offset="0.568" stop-color="#fffe7c"/><stop offset="0.617" stop-color="#ffbc54"/><stop offset="0.688" stop-color="#ff8131"/><stop offset="0.799" stop-color="#ff4d12"/><stop offset="0.941" stop-color="#ff2800"/><stop offset="1" stop-color="#ff1e00"/></linearGradient>
<linearGradient id="c89" gradientUnits="userSpaceOnUse" x1="740" x2="1066" y1="0" y2="0"><stop offset="0" stop-color="#00ffba"/><stop offset="0.374" stop-color="#04ff9d"/><stop offset="0.475" stop-color="#81ff91"/><stop offset="0.558" stop-color="#fffb81"/><stop offset="0.607" stop-color="#ffb958"/><stop offset="0.678" stop-color="#ff7e34"/><stop offset="0.788" stop-color="#ff4b14"/><stop offset="0.942" stop-color="#ff2400"/><stop offset="1" stop-color="#ff1a00"/></linearGradient>
<linearGradient id="c90" gradientUnits="userSpaceOnUse" x1="740" x2="1069" y1="0" y2="0"><stop offset="0" stop-color="#00ffbe"/><stop offset="0.368" stop-color="#03ffa3"/><stop offset="0.465" stop-color="#7eff98"/><stop offset="0.547" stop-color="#fffd8a"/><stop offset="0.596" stop-color="#ffb95f"/><stop offset="0.666" stop-color="#ff7e39"/><stop offset="0.772" stop-color="#ff4b18"/><stop offset="0.939" stop-color="#ff2100"/><stop offset="1" stop-color="#ff1700"/></linearGradient>
<linearGradient id="c91" gradientUnits="userSpaceOnUse" x1="741" x2="1071" y1="0" y2="0"><stop offset="0" stop-color="#00ffc3"/><stop offset="0.361" stop-color="#02ffaa"/><stop offset="0.458" stop-color="#7fff9f"/><stop offset="0.536" stop-color="#ffff93"/><stop offset="0.582" stop-color="#ffbd68"/><stop offset="0.648" stop-color="#ff8140"/><stop offset="0.752" stop-color="#ff4d1d"/><stop offset="0.921" stop-color="#ff2100"/><stop offset="1" stop-color="#ff1500"/></linearGradient>
<linearGradient id="c92" gradientUnits="userSpaceOnUse" x1="741" x2="1074" y1="0" y2="0"><stop offset="0" stop-color="#00ffc8"/><stop offset="0.354" stop-color="#01ffb1"/><stop offset="0.45" stop-color="#80ffa6"/><stop offset="0.529" stop-color="#fffb99"/><stop offset="0.574" stop-color="#ffba6c"/><stop offset="0.64" stop-color="#ff7f43"/><stop offset="0.742" stop-color="#ff4b20"/><stop offset="0.91" stop-color="#ff2001"/><stop offset="1" stop-color="#ff1200"/></linearGradient>
<linearGradient id="c93" gradientUnits="userSpaceOnUse" x1="741" x2="1077" y1="0" y2="0"><stop offset="0" stop-color="#00ffcd"/><stop offset="0.351" stop-color="#04ffb7"/><stop offset="0.443" stop-color="#81ffae"/><stop offset="0.518" stop-color="#fffda3"/><stop offset="0.562" stop-color="#ffba73"/><stop offset="0.628" stop-color="#ff7e48"/><stop offset="0.729" stop-color="#ff4b23"/><stop offset="0.896" stop-color="#ff1f04"/><stop offset="1" stop-color="#ff0f00"/></linearGradient>
<linearGradient id="c94" gradientUnits="userSpaceOnUse" x1="742" x2="1080" y1="0" y2="0"><stop offset="0" stop-color="#00ffd1"/><stop offset="0.343" stop-color="#03ffbe"/><stop offset="0.432" stop-color="#7effb6"/><stop offset="0.506" stop-color="#ffffad"/><stop offset="0.547" stop-color="#ffbe7d"/><stop offset="0.609" stop-color="#ff8250"/><stop offset="0.704" stop-color="#ff4e2a"/><stop offset="0.861" stop-color="#ff2209"/><stop offset="0.982" stop-color="#ff0e00"/><stop offset="1" stop-color="#ff0c00"/></linearGradient>
<linearGradient id="c95" gradientUnits="userSpaceOnUse" x1="742" x2="1082" y1="0" y2="0"><stop offset="0" stop-color="#00ffd7"/><stop offset="0.338" stop-color="#02ffc6"/><stop offset="0.426" stop-color="#7fffbe"/><stop offset="0.5" stop-color="#fffbb4"/><stop offset="0.541" stop-color="#ffbb82"/><stop offset="0.603" stop-color="#ff7f54"/><stop offset="0.697" stop-color="#ff4c2c"/><stop offset="0.853" stop-color="#ff200a"/><stop offset="0.979" stop-color="#ff0c00"/><stop offset="1" stop-color="#ff0a00"/></linearGradient>
<linearGradient id="c96" gradientUnits="userSpaceOnUse" x1="743" x2="1085" y1="0" y2="0"><stop offset="0" stop-color="#00ffdc"/><stop offset="0.33" stop-color="#02ffcd"/><stop offset="0.418" stop-color="#80ffc7"/><stop offset="0.488" stop-color="#fffdbf"/><stop offset="0.529" stop-color="#ffbb8a"/><stop offset="0.588" stop-color="#ff815b"/><stop offset="0.678" stop-color="#ff4e32"/><stop offset="0.827" stop-color="#ff220e"/><stop offset="0.971" stop-color="#ff0b00"/><stop offset="1" stop-color="#ff0700"/></linearGradient>
<linearGradient id="c97" gradientUnits="userSpaceOnUse" x1="743" x2="1088" y1="0" y2="0"><stop offset="0" stop-color="#00ffe1"/><stop offset="0.325" stop-color="#01ffd5"/><stop offset="0.409" stop-color="#7dffd0"/><stop offset="0.478" stop-color="#ffffca"/><stop offset="0.519" stop-color="#ffbb92"/><stop offset="0.577" stop-color="#ff8161"/><stop offset="0.667" stop-color="#ff4d35"/><stop offset="0.814" stop-color="#ff2111"/><stop offset="0.971" stop-color="#ff0800"/><stop offset="1" stop-color="#ff0500"/></linearGradient>
<linearGradient id="c98" gradientUnits="userSpaceOnUse" x1="744" x2="1091" y1="0" y2="0"><stop offset="0" stop-color="#00ffe7"/><stop offset="0.32" stop-color="#04ffdd"/><stop offset="0.401" stop-color="#7effd9"/><stop offset="0.47" stop-color="#fffbd1"/><stop offset="0.51" stop-color="#ffb897"/><stop offset="0.568" stop-color="#ff7e64"/><stop offset="0.657" stop-color="#ff4b38"/><stop offset="0.807" stop-color="#ff1f12"/><stop offset="0.971" stop-color="#ff0600"/><stop offset="1" stop-color="#ff0300"/></linearGradient>
<linearGradient id="c99" gradientUnits="userSpaceOnUse" x1="744" x2="1093" y1="0" y2="0"><stop offset="0" stop-color="#00ffec"/><stop offset="0.315" stop-color="#03ffe5"/><stop offset="0.395" stop-color="#7fffe2"/><stop offset="0.461" stop-color="#fffddd"/><stop offset="0.499" stop-color="#ffbca3"/><stop offset="0.553" stop-color="#ff826e"/><stop offset="0.636" stop-color="#ff4f40"/><stop offset="0.774" stop-color="#ff2319"/><stop offset="0.966" stop-color="#ff0400"/><stop offset="1" stop-color="#ff0100"/></linearGradient>
<linearGradient id="c100" gradientUnits="userSpaceOnUse" x1="745" x2="1096" y1="0" y2="0"><stop offset="0" stop-color="#00fff2"/><stop offset="0.308" stop-color="#02ffee"/><stop offset="0.387" stop-color="#81ffec"/><stop offset="0.45" stop-color="#ffffea"/><stop offset="0.487" stop-color="#ffbdac"/><stop offset="0.541" stop-color="#ff8174"/><stop offset="0.624" stop-color="#ff4e44"/><stop offset="0.761" stop-color="#ff221b"/><stop offset="0.963" stop-color="#ff0200"/><stop offset="1" stop-color="#f00"/></linearGradient>
<linearGradient id="c101" gradientUnits="userSpaceOnUse" x1="746" x2="1099" y1="0" y2="0"><stop offset="0" stop-color="#00fff8"/><stop offset="0.3" stop-color="#01fff6"/><stop offset="0.377" stop-color="#7dfff6"/><stop offset="0.442" stop-color="#fffbf1"/><stop offset="0.479" stop-color="#ffb9b1"/><stop offset="0.533" stop-color="#ff7e78"/><stop offset="0.615" stop-color="#ff4b47"/><stop offset="0.751" stop-color="#ff201d"/><stop offset="0.96" stop-color="#f00"/><stop offset="1" stop-color="#f00"/></linearGradient>
<linearGradient id="c102" gradientUnits="userSpaceOnUse" x1="746" x2="1102" y1="0" y2="0"><stop offset="0" stop-color="#0ff"/><stop offset="0.295" stop-color="#00feff"/><stop offset="0.371" stop-color="#7efeff"/><stop offset="0.433" stop-color="#fffdfe"/><stop offset="0.469" stop-color="#ffb9bb"/><stop offset="0.522" stop-color="#ff7e7f"/><stop offset="0.604" stop-color="#ff4a4b"/><stop offset="0.739" stop-color="#ff1f20"/><stop offset="0.952" stop-color="#f00"/><stop offset="1" stop-color="#f00"/></linearGradient>
<linearGradient id="c103" gradientUnits="userSpaceOnUse" x1="747" x2="1104" y1="0" y2="0"><stop offset="0" stop-color="#00f9ff"/><stop offset="0.291" stop-color="#03f5ff"/><stop offset="0.367" stop-color="#7ff4ff"/><stop offset="0.429" stop-color="#fff2ff"/><stop offset="0.465" stop-color="#ffb2bc"/><stop offset="0.518" stop-color="#ff7881"/><stop offset="0.599" stop-color="#ff474d"/><stop offset="0.734" stop-color="#ff1d21"/><stop offset="0.938" stop-color="#ff0001"/><stop offset="1" stop-color="#f00"/></linearGradient>
<linearGradient id="c104" gradientUnits="userSpaceOnUse" x1="747" x2="1107" y1="0" y2="0"><stop offset="0" stop-color="#00f3ff"/><stop offset="0.286" stop-color="#02ecff"/><stop offset="0.364" stop-color="#80eaff"/><stop offset="0.425" stop-color="#fee7ff"/><stop offset="0.464" stop-color="#ffa7ba"/><stop offset="0.517" stop-color="#ff7180"/><stop offset="0.6" stop-color="#ff414c"/><stop offset="0.736" stop-color="#ff1921"/><stop offset="0.922" stop-color="#ff0003"/><stop offset="1" stop-color="#f00"/></linearGradient>
<linearGradient id="c105" gradientUnits="userSpaceOnUse" x1="748" x2="1110" y1="0" y2="0"><stop offset="0" stop-color="#00ecff"/><stop offset="0.279" stop-color="#01e4ff"/><stop offset="0.356" stop-color="#7de0ff"/><stop offset="0.42" stop-color="#fddcff"/><stop offset="0.461" stop-color="#ff9cb7"/><stop offset="0.517" stop-color="#ff687d"/><stop offset="0.602" stop-color="#ff3a4a"/><stop offset="0.746" stop-color="#ff131e"/><stop offset="0.909" stop-color="#ff0005"/><stop offset="1" stop-color="#f00"/></linearGradient>
<linearGradient id="c106" gradientUnits="userSpaceOnUse" x1="748" x2="1113" y1="0" y2="0"><stop offset="0" stop-color="#00e6ff"/><stop offset="0.277" stop-color="#04dcff"/><stop offset="0.356" stop-color="#83d6ff"/><stop offset="0.419" stop-color="#ffcffc"/><stop offset="0.458" stop-color="#ff95b9"/><stop offset="0.512" stop-color="#ff637f"/><stop offset="0.597" stop-color="#ff374b"/><stop offset="0.74" stop-color="#ff111f"/><stop offset="0.888" stop-color="#ff0007"/><stop offset="1" stop-color="#f00"/></linearGradient>
<linearGradient id="c107" gradientUnits="userSpaceOnUse" x1="749" x2="1115" y1="0" y2="0"><stop offset="0" stop-color="#00e0ff"/><stop offset="0.27" stop-color="#03d4ff"/><stop offset="0.35" stop-color="#7fceff"/><stop offset="0.415" stop-color="#ffc5fc"/><stop offset="0.454" stop-color="#ff8eba"/><stop offset="0.508" stop-color="#ff5e80"/><stop offset="0.593" stop-color="#ff344d"/><stop offset="0.732" stop-color="#ff0f21"/><stop offset="0.872" stop-color="#ff000a"/><stop offset="1" stop-color="#f00"/></linearGradient>
<linearGradient id="c108" gradientUnits="userSpaceOnUse" x1="749" x2="1118" y1="0" y2="0"><stop offset="0" stop-color="#00dbff"/><stop offset="0.266" stop-color="#02ccff"/><stop offset="0.347" stop-color="#81c5ff"/><stop offset="0.412" stop-color="#ffbcfd"/><stop offset="0.45" stop-color="#f8b"/><stop offset="0.504" stop-color="#ff5a82"/><stop offset="0.588" stop-color="#ff304e"/><stop offset="0.726" stop-color="#ff0d23"/><stop offset="0.854" stop-color="#ff000c"/><stop offset="1" stop-color="#f00"/></linearGradient>
<linearGradient id="c109" gradientUnits="userSpaceOnUse" x1="750" x2="1121" y1="0" y2="0"><stop offset="0" stop-color="#00d5ff"/><stop offset="0.259" stop-color="#01c5ff"/><stop offset="0.34" stop-color="#7dbdff"/><stop offset="0.407" stop-color="#ffb3fe"/><stop offset="0.445" stop-color="#ff81bd"/><stop offset="0.501" stop-color="#ff5381"/><stop offset="0.588" stop-color="#ff2b4d"/><stop offset="0.73" stop-color="#ff0921"/><stop offset="0.841" stop-color="#ff000e"/><stop offset="1" stop-color="#f00"/></linearGradient>
<linearGradient id="c110" gradientUnits="userSpaceOnUse" x1="751" x2="1124" y1="0" y2="0"><stop offset="0" stop-color="#00cfff"/><stop offset="0.255" stop-color="#04bdff"/><stop offset="0.338" stop-color="#83b4ff"/><stop offset="0.402" stop-color="#ffabff"/><stop offset="0.44" stop-color="#ff7bbe"/><stop offset="0.496" stop-color="#ff4f83"/><stop offset="0.582" stop-color="#ff284f"/><stop offset="0.724" stop-color="#ff0723"/><stop offset="0.834" stop-color="#ff000f"/><stop offset="1" stop-color="#f00"/></linearGradient>
<linearGradient id="c111" gradientUnits="userSpaceOnUse" x1="751" x2="1126" y1="0" y2="0"><stop offset="0" stop-color="#00caff"/><stop offset="0.251" stop-color="#03b6ff"/><stop offset="0.333" stop-color="#80acff"/><stop offset="0.4" stop-color="#ffa2ff"/><stop offset="0.44" stop-color="#ff72bc"/><stop offset="0.496" stop-color="#ff4982"/><stop offset="0.584" stop-color="#ff244e"/><stop offset="0.728" stop-color="#ff0422"/><stop offset="0.973" stop-color="#f00"/><stop offset="1" stop-color="#f00"/></linearGradient>
<linearGradient id="c112" gradientUnits="userSpaceOnUse" x1="752" x2="1129" y1="0" y2="0"><stop offset="0" stop-color="#00c4ff"/><stop offset="0.244" stop-color="#02afff"/><stop offset="0.329" stop-color="#81a5ff"/><stop offset="0.395" stop-color="#fe9aff"/><stop offset="0.438" stop-color="#ff6aba"/><stop offset="0.496" stop-color="#ff427f"/><stop offset="0.586" stop-color="#ff1e4c"/><stop offset="0.735" stop-color="#ff0020"/><stop offset="0.981" stop-color="#f00"/><stop offset="1" stop-color="#f00"/></linearGradient>
<linearGradient id="c113" gradientUnits="userSpaceOnUse" x1="752" x2="1132" y1="0" y2="0"><stop offset="0" stop-color="#00bfff"/><stop offset="0.239" stop-color="#01a9ff"/><stop offset="0.324" stop-color="#7d9dff"/><stop offset="0.395" stop-color="#ff8ffb"/><stop offset="0.434" stop-color="#ff64bb"/><stop offset="0.492" stop-color="#ff3e81"/><stop offset="0.582" stop-color="#ff1c4d"/><stop offset="0.729" stop-color="#f02"/><stop offset="0.979" stop-color="#f00"/><stop offset="1" stop-color="#f00"/></linearGradient>
<linearGradient id="c114" gradientUnits="userSpaceOnUse" x1="753" x2="1134" y1="0" y2="0"><stop offset="0" stop-color="#00b9ff"/><stop offset="0.236" stop-color="#04a2ff"/><stop offset="0.323" stop-color="#8396ff"/><stop offset="0.391" stop-color="#ff87fc"/><stop offset="0.433" stop-color="#ff5db9"/><stop offset="0.493" stop-color="#ff377e"/><stop offset="0.585" stop-color="#ff174b"/><stop offset="0.724" stop-color="#ff0023"/><stop offset="0.979" stop-color="#f00"/><stop offset="1" stop-color="#f00"/></linearGradient>
<linearGradient id="c115" gradientUnits="userSpaceOnUse" x1="754" x2="1134" y1="0" y2="0"><stop offset="0" stop-color="#00b4ff"/><stop offset="0.232" stop-color="#039cff"/><stop offset="0.318" stop-color="#808fff"/><stop offset="0.389" stop-color="#ff80fd"/><stop offset="0.432" stop-color="#ff57ba"/><stop offset="0.492" stop-color="#ff337f"/><stop offset="0.587" stop-color="#ff134c"/><stop offset="0.713" stop-color="#ff0026"/><stop offset="0.974" stop-color="#ff0001"/><stop offset="1" stop-color="#f00"/></linearGradient>
<linearGradient id="c116" gradientUnits="userSpaceOnUse" x1="754" x2="1129" y1="0" y2="0"><stop offset="0" stop-color="#00afff"/><stop offset="0.232" stop-color="#0296ff"/><stop offset="0.323" stop-color="#8188ff"/><stop offset="0.395" stop-color="#ff79fe"/><stop offset="0.437" stop-color="#ff52bb"/><stop offset="0.499" stop-color="#ff2f81"/><stop offset="0.595" stop-color="#ff114d"/><stop offset="0.709" stop-color="#ff002a"/><stop offset="0.96" stop-color="#ff0004"/><stop offset="1" stop-color="#f00"/></linearGradient>
<linearGradient id="c117" gradientUnits="userSpaceOnUse" x1="755" x2="1124" y1="0" y2="0"><stop offset="0" stop-color="#0af"/><stop offset="0.23" stop-color="#0191ff"/><stop offset="0.322" stop-color="#7e82ff"/><stop offset="0.398" stop-color="#ff72fe"/><stop offset="0.442" stop-color="#ff4dbc"/><stop offset="0.504" stop-color="#ff2c82"/><stop offset="0.602" stop-color="#ff0e4e"/><stop offset="0.707" stop-color="#ff002e"/><stop offset="0.951" stop-color="#ff0007"/><stop offset="1" stop-color="#ff0002"/></linearGradient>
<linearGradient id="c118" gradientUnits="userSpaceOnUse" x1="756" x2="1118" y1="0" y2="0"><stop offset="0" stop-color="#00a5ff"/><stop offset="0.232" stop-color="#048bff"/><stop offset="0.329" stop-color="#837bff"/><stop offset="0.403" stop-color="#ff6bff"/><stop offset="0.448" stop-color="#ff48be"/><stop offset="0.514" stop-color="#ff2782"/><stop offset="0.616" stop-color="#ff0a4d"/><stop offset="0.71" stop-color="#ff0031"/><stop offset="0.95" stop-color="#ff000a"/><stop offset="1" stop-color="#ff0005"/></linearGradient>
<linearGradient id="c119" gradientUnits="userSpaceOnUse" x1="756" x2="1112" y1="0" y2="0"><stop offset="0" stop-color="#00a0ff"/><stop offset="0.233" stop-color="#0385ff"/><stop offset="0.331" stop-color="#8075ff"/><stop offset="0.41" stop-color="#fe64ff"/><stop offset="0.458" stop-color="#ff41bb"/><stop offset="0.525" stop-color="#ff2281"/><stop offset="0.629" stop-color="#ff074e"/><stop offset="0.722" stop-color="#ff0032"/><stop offset="0.966" stop-color="#ff000b"/><stop offset="1" stop-color="#ff0007"/></linearGradient>
<linearGradient id="c120" gradientUnits="userSpaceOnUse" x1="757" x2="1106" y1="0" y2="0"><stop offset="0" stop-color="#009bff"/><stop offset="0.232" stop-color="#0280ff"/><stop offset="0.335" stop-color="#816fff"/><stop offset="0.418" stop-color="#ff5cfb"/><stop offset="0.467" stop-color="#ff3bba"/><stop offset="0.539" stop-color="#ff1d7f"/><stop offset="0.65" stop-color="#ff034b"/><stop offset="0.834" stop-color="#ff001f"/><stop offset="1" stop-color="#ff000a"/></linearGradient>
<linearGradient id="c121" gradientUnits="userSpaceOnUse" x1="758" x2="1100" y1="0" y2="0"><stop offset="0" stop-color="#0096ff"/><stop offset="0.231" stop-color="#017bff"/><stop offset="0.336" stop-color="#7e69ff"/><stop offset="0.424" stop-color="#ff55fc"/><stop offset="0.474" stop-color="#ff36bb"/><stop offset="0.547" stop-color="#ff1a80"/><stop offset="0.661" stop-color="#ff014c"/><stop offset="0.848" stop-color="#ff0020"/><stop offset="1" stop-color="#ff000c"/></linearGradient>
<linearGradient id="c122" gradientUnits="userSpaceOnUse" x1="758" x2="1094" y1="0" y2="0"><stop offset="0" stop-color="#0091ff"/><stop offset="0.235" stop-color="#0475ff"/><stop offset="0.345" stop-color="#8363ff"/><stop offset="0.432" stop-color="#ff4ffd"/><stop offset="0.482" stop-color="#ff31bc"/><stop offset="0.557" stop-color="#ff1681"/><stop offset="0.673" stop-color="#ff004d"/><stop offset="0.863" stop-color="#ff0021"/><stop offset="1" stop-color="#ff000f"/></linearGradient>
<linearGradient id="c123" gradientUnits="userSpaceOnUse" x1="759" x2="1088" y1="0" y2="0"><stop offset="0" stop-color="#008dff"/><stop offset="0.234" stop-color="#0371ff"/><stop offset="0.347" stop-color="#805eff"/><stop offset="0.438" stop-color="#ff49fd"/><stop offset="0.492" stop-color="#ff2cba"/><stop offset="0.571" stop-color="#ff127f"/><stop offset="0.681" stop-color="#ff004f"/><stop offset="0.875" stop-color="#ff0023"/><stop offset="1" stop-color="#ff0012"/></linearGradient>
<linearGradient id="c124" gradientUnits="userSpaceOnUse" x1="760" x2="1083" y1="0" y2="0"><stop offset="0" stop-color="#08f"/><stop offset="0.232" stop-color="#026cff"/><stop offset="0.35" stop-color="#8158ff"/><stop offset="0.443" stop-color="#ff44fe"/><stop offset="0.498" stop-color="#ff27bb"/><stop offset="0.579" stop-color="#ff0e80"/><stop offset="0.678" stop-color="#f05"/><stop offset="0.867" stop-color="#ff0027"/><stop offset="1" stop-color="#ff0015"/></linearGradient>
<linearGradient id="c125" gradientUnits="userSpaceOnUse" x1="761" x2="1077" y1="0" y2="0"><stop offset="0" stop-color="#0083ff"/><stop offset="0.231" stop-color="#0167ff"/><stop offset="0.351" stop-color="#7e53ff"/><stop offset="0.449" stop-color="#ff3efe"/><stop offset="0.506" stop-color="#ff23bc"/><stop offset="0.589" stop-color="#ff0b81"/><stop offset="0.68" stop-color="#ff0059"/><stop offset="0.867" stop-color="#ff002b"/><stop offset="1" stop-color="#ff0018"/></linearGradient>
<linearGradient id="c126" gradientUnits="userSpaceOnUse" x1="761" x2="1071" y1="0" y2="0"><stop offset="0" stop-color="#007fff"/><stop offset="0.235" stop-color="#0462ff"/><stop offset="0.361" stop-color="#834dff"/><stop offset="0.458" stop-color="#ff38ff"/><stop offset="0.516" stop-color="#ff1fbd"/><stop offset="0.6" stop-color="#ff0882"/><stop offset="0.687" stop-color="#ff005c"/><stop offset="0.871" stop-color="#ff002e"/><stop offset="1" stop-color="#ff001b"/></linearGradient>
<linearGradient id="c127" gradientUnits="userSpaceOnUse" x1="762" x2="1065" y1="0" y2="0"><stop offset="0" stop-color="#007aff"/><stop offset="0.234" stop-color="#035eff"/><stop offset="0.363" stop-color="#8048ff"/><stop offset="0.469" stop-color="#ff31fb"/><stop offset="0.531" stop-color="#ff19b8"/><stop offset="0.624" stop-color="#ff037d"/><stop offset="0.766" stop-color="#ff004a"/><stop offset="1" stop-color="#ff001e"/></linearGradient>
<linearGradient id="c128" gradientUnits="userSpaceOnUse" x1="763" x2="1059" y1="0" y2="0"><stop offset="0" stop-color="#0076ff"/><stop offset="0.233" stop-color="#025aff"/><stop offset="0.368" stop-color="#8143ff"/><stop offset="0.476" stop-color="#ff2cfc"/><stop offset="0.541" stop-color="#ff15b9"/><stop offset="0.635" stop-color="#ff007e"/><stop offset="0.78" stop-color="#ff004b"/><stop offset="1" stop-color="#f02"/></linearGradient>
<linearGradient id="c129" gradientUnits="userSpaceOnUse" x1="764" x2="1053" y1="0" y2="0"><stop offset="0" stop-color="#0072ff"/><stop offset="0.232" stop-color="#0156ff"/><stop offset="0.37" stop-color="#7f3fff"/><stop offset="0.484" stop-color="#ff27fc"/><stop offset="0.55" stop-color="#ff11ba"/><stop offset="0.647" stop-color="#ff007f"/><stop offset="0.796" stop-color="#ff004c"/><stop offset="1" stop-color="#ff0026"/></linearGradient>
<linearGradient id="c130" gradientUnits="userSpaceOnUse" x1="764" x2="1047" y1="0" y2="0"><stop offset="0" stop-color="#006eff"/><stop offset="0.237" stop-color="#0351ff"/><stop offset="0.382" stop-color="#833aff"/><stop offset="0.495" stop-color="#ff22fd"/><stop offset="0.562" stop-color="#ff0dbb"/><stop offset="0.65" stop-color="#ff0085"/><stop offset="0.795" stop-color="#ff0051"/><stop offset="1" stop-color="#ff002a"/></linearGradient>
<linearGradient id="c131" gradientUnits="userSpaceOnUse" x1="765" x2="1041" y1="0" y2="0"><stop offset="0" stop-color="#0069ff"/><stop offset="0.236" stop-color="#034dff"/><stop offset="0.384" stop-color="#8135ff"/><stop offset="0.504" stop-color="#ff1dfd"/><stop offset="0.576" stop-color="#ff08ba"/><stop offset="0.656" stop-color="#ff008a"/><stop offset="0.801" stop-color="#f05"/><stop offset="1" stop-color="#ff002e"/></linearGradient>
<linearGradient id="c132" gradientUnits="userSpaceOnUse" x1="766" x2="1036" y1="0" y2="0"><stop offset="0" stop-color="#0065ff"/><stop offset="0.233" stop-color="#0249ff"/><stop offset="0.389" stop-color="#8131ff"/><stop offset="0.511" stop-color="#ff18fe"/><stop offset="0.585" stop-color="#ff05bb"/><stop offset="0.693" stop-color="#ff007f"/><stop offset="0.859" stop-color="#ff004c"/><stop offset="1" stop-color="#ff0031"/></linearGradient>
<linearGradient id="c133" gradientUnits="userSpaceOnUse" x1="767" x2="1030" y1="0" y2="0"><stop offset="0" stop-color="#0061ff"/><stop offset="0.236" stop-color="#0445ff"/><stop offset="0.395" stop-color="#822cff"/><stop offset="0.521" stop-color="#ff14ff"/><stop offset="0.597" stop-color="#ff01bc"/><stop offset="0.707" stop-color="#ff0081"/><stop offset="0.878" stop-color="#ff004d"/><stop offset="1" stop-color="#ff0036"/></linearGradient>
<linearGradient id="c134" gradientUnits="userSpaceOnUse" x1="768" x2="1024" y1="0" y2="0"><stop offset="0" stop-color="#005dff"/><stop offset="0.234" stop-color="#0341ff"/><stop offset="0.398" stop-color="#8028ff"/><stop offset="0.535" stop-color="#ff0efb"/><stop offset="0.613" stop-color="#ff00ba"/><stop offset="0.73" stop-color="#ff007f"/><stop offset="0.91" stop-color="#ff004b"/><stop offset="1" stop-color="#ff003a"/></linearGradient>
<linearGradient id="c135" gradientUnits="userSpaceOnUse" x1="769" x2="1018" y1="0" y2="0"><stop offset="0" stop-color="#0058ff"/><stop offset="0.233" stop-color="#033eff"/><stop offset="0.406" stop-color="#8124ff"/><stop offset="0.546" stop-color="#ff09fc"/><stop offset="0.622" stop-color="#ff00be"/><stop offset="0.739" stop-color="#ff0083"/><stop offset="0.92" stop-color="#ff004f"/><stop offset="1" stop-color="#ff003f"/></linearGradient>
<linearGradient id="c136" gradientUnits="userSpaceOnUse" x1="770" x2="1012" y1="0" y2="0"><stop offset="0" stop-color="#0054ff"/><stop offset="0.231" stop-color="#023aff"/><stop offset="0.413" stop-color="#8120ff"/><stop offset="0.558" stop-color="#ff05fc"/><stop offset="0.645" stop-color="#ff00b9"/><stop offset="0.773" stop-color="#ff007e"/><stop offset="0.967" stop-color="#ff004b"/><stop offset="1" stop-color="#ff0045"/></linearGradient>
<linearGradient id="c137" gradientUnits="userSpaceOnUse" x1="771" x2="1006" y1="0" y2="0"><stop offset="0" stop-color="#0050ff"/><stop offset="0.234" stop-color="#0436ff"/><stop offset="0.421" stop-color="#821cff"/><stop offset="0.57" stop-color="#ff01fd"/><stop offset="0.66" stop-color="#ff00ba"/><stop offset="0.791" stop-color="#ff007f"/><stop offset="0.996" stop-color="#ff004b"/><stop offset="1" stop-color="#ff004a"/></linearGradient>
<linearGradient id="c138" gradientUnits="userSpaceOnUse" x1="772" x2="1000" y1="0" y2="0"><stop offset="0" stop-color="#004cff"/><stop offset="0.232" stop-color="#0333ff"/><stop offset="0.425" stop-color="#8018ff"/><stop offset="0.583" stop-color="#ff00fd"/><stop offset="0.675" stop-color="#f0b"/><stop offset="0.811" stop-color="#ff0080"/><stop offset="1" stop-color="#ff0050"/></linearGradient>
<linearGradient id="c139" gradientUnits="userSpaceOnUse" x1="773" x2="995" y1="0" y2="0"><stop offset="0" stop-color="#0048ff"/><stop offset="0.23" stop-color="#0330ff"/><stop offset="0.432" stop-color="#8114ff"/><stop offset="0.581" stop-color="#f500ff"/><stop offset="0.599" stop-color="#ff00fa"/><stop offset="0.698" stop-color="#ff00b7"/><stop offset="0.842" stop-color="#ff007d"/><stop offset="1" stop-color="#f05"/></linearGradient>
<linearGradient id="c140" gradientUnits="userSpaceOnUse" x1="774" x2="989" y1="0" y2="0"><stop offset="0" stop-color="#04f"/><stop offset="0.228" stop-color="#022dff"/><stop offset="0.442" stop-color="#8210ff"/><stop offset="0.577" stop-color="#e500ff"/><stop offset="0.614" stop-color="#ff00fa"/><stop offset="0.716" stop-color="#ff00b8"/><stop offset="0.865" stop-color="#ff007e"/><stop offset="1" stop-color="#ff005c"/></linearGradient>
<linearGradient id="c141" gradientUnits="userSpaceOnUse" x1="775" x2="983" y1="0" y2="0"><stop offset="0" stop-color="#0041ff"/><stop offset="0.231" stop-color="#0429ff"/><stop offset="0.452" stop-color="#820dff"/><stop offset="0.567" stop-color="#d300ff"/><stop offset="0.63" stop-color="#ff00fb"/><stop offset="0.736" stop-color="#ff00b9"/><stop offset="0.889" stop-color="#ff007f"/><stop offset="1" stop-color="#ff0063"/></linearGradient>
<linearGradient id="c142" gradientUnits="userSpaceOnUse" x1="776" x2="977" y1="0" y2="0"><stop offset="0" stop-color="#003dff"/><stop offset="0.229" stop-color="#0326ff"/><stop offset="0.458" stop-color="#8009ff"/><stop offset="0.567" stop-color="#c800ff"/><stop offset="0.647" stop-color="#ff00fb"/><stop offset="0.756" stop-color="#ff00ba"/><stop offset="0.92" stop-color="#ff007e"/><stop offset="1" stop-color="#ff006a"/></linearGradient>
<linearGradient id="c143" gradientUnits="userSpaceOnUse" x1="777" x2="971" y1="0" y2="0"><stop offset="0" stop-color="#0039ff"/><stop offset="0.227" stop-color="#0323ff"/><stop offset="0.469" stop-color="#8106ff"/><stop offset="0.603" stop-color="#d600ff"/><stop offset="0.665" stop-color="#ff00fc"/><stop offset="0.784" stop-color="#ff00b8"/><stop offset="0.954" stop-color="#ff007e"/><stop offset="1" stop-color="#ff0072"/></linearGradient>
<linearGradient id="c144" gradientUnits="userSpaceOnUse" x1="778" x2="965" y1="0" y2="0"><stop offset="0" stop-color="#0035ff"/><stop offset="0.225" stop-color="#0220ff"/><stop offset="0.481" stop-color="#8202ff"/><stop offset="0.684" stop-color="#ff00fc"/><stop offset="0.807" stop-color="#ff00b9"/><stop offset="0.984" stop-color="#ff007f"/><stop offset="1" stop-color="#ff007b"/></linearGradient>
<linearGradient id="c145" gradientUnits="userSpaceOnUse" x1="779" x2="959" y1="0" y2="0"><stop offset="0" stop-color="#0032ff"/><stop offset="0.228" stop-color="#041dff"/><stop offset="0.494" stop-color="#8200ff"/><stop offset="0.706" stop-color="#ff00fd"/><stop offset="0.833" stop-color="#ff00ba"/><stop offset="1" stop-color="#ff0084"/></linearGradient>
<linearGradient id="c146" gradientUnits="userSpaceOnUse" x1="780" x2="953" y1="0" y2="0"><stop offset="0" stop-color="#002eff"/><stop offset="0.225" stop-color="#031aff"/><stop offset="0.503" stop-color="#8000ff"/><stop offset="0.728" stop-color="#ff00fd"/><stop offset="0.861" stop-color="#f0b"/><stop offset="1" stop-color="#ff008e"/></linearGradient>
<linearGradient id="c147" gradientUnits="userSpaceOnUse" x1="781" x2="948" y1="0" y2="0"><stop offset="0" stop-color="#002aff"/><stop offset="0.222" stop-color="#0317ff"/><stop offset="0.497" stop-color="#7800ff"/><stop offset="0.749" stop-color="#ff00fe"/><stop offset="0.886" stop-color="#ff00bc"/><stop offset="1" stop-color="#ff0097"/></linearGradient>
<linearGradient id="c148" gradientUnits="userSpaceOnUse" x1="782" x2="942" y1="0" y2="0"><stop offset="0" stop-color="#0027ff"/><stop offset="0.219" stop-color="#0215ff"/><stop offset="0.481" stop-color="#6b00ff"/><stop offset="0.744" stop-color="#e0f"/><stop offset="0.781" stop-color="#ff00fb"/><stop offset="0.931" stop-color="#ff00b8"/><stop offset="1" stop-color="#ff00a2"/></linearGradient>
<linearGradient id="c149" gradientUnits="userSpaceOnUse" x1="783" x2="936" y1="0" y2="0"><stop offset="0" stop-color="#0023ff"/><stop offset="0.222" stop-color="#0412ff"/><stop offset="0.464" stop-color="#5e00ff"/><stop offset="0.752" stop-color="#e300ff"/><stop offset="0.81" stop-color="#ff00fb"/><stop offset="0.967" stop-color="#ff00b9"/><stop offset="1" stop-color="#ff00af"/></linearGradient>
<linearGradient id="c150" gradientUnits="userSpaceOnUse" x1="784" x2="930" y1="0" y2="0"><stop offset="0" stop-color="#0020ff"/><stop offset="0.219" stop-color="#030fff"/><stop offset="0.452" stop-color="#50f"/><stop offset="0.76" stop-color="#d900ff"/><stop offset="0.842" stop-color="#ff00fc"/><stop offset="1" stop-color="#ff00bc"/></linearGradient>
<linearGradient id="c151" gradientUnits="userSpaceOnUse" x1="785" x2="924" y1="0" y2="0"><stop offset="0" stop-color="#001cff"/><stop offset="0.216" stop-color="#030dff"/><stop offset="0.439" stop-color="#4c00ff"/><stop offset="0.77" stop-color="#cf00ff"/><stop offset="0.878" stop-color="#ff00fc"/><stop offset="1" stop-color="#ff00cb"/></linearGradient>
<linearGradient id="c152" gradientUnits="userSpaceOnUse" x1="786" x2="918" y1="0" y2="0"><stop offset="0" stop-color="#0019ff"/><stop offset="0.212" stop-color="#020aff"/><stop offset="0.432" stop-color="#4500ff"/><stop offset="0.788" stop-color="#c900ff"/><stop offset="0.917" stop-color="#ff00fd"/><stop offset="1" stop-color="#ff00db"/></linearGradient>
<linearGradient id="c153" gradientUnits="userSpaceOnUse" x1="788" x2="912" y1="0" y2="0"><stop offset="0" stop-color="#0015ff"/><stop offset="0.21" stop-color="#0407ff"/><stop offset="0.444" stop-color="#4700ff"/><stop offset="0.823" stop-color="#c900ff"/><stop offset="0.96" stop-color="#ff00fd"/><stop offset="1" stop-color="#ff00ed"/></linearGradient>
<linearGradient id="c154" gradientUnits="userSpaceOnUse" x1="789" x2="907" y1="0" y2="0"><stop offset="0" stop-color="#0012ff"/><stop offset="0.203" stop-color="#0305ff"/><stop offset="0.644" stop-color="#8000ff"/><stop offset="1" stop-color="#ff00fe"/></linearGradient>
<linearGradient id="c155" gradientUnits="userSpaceOnUse" x1="790" x2="901" y1="0" y2="0"><stop offset="0" stop-color="#000eff"/><stop offset="0.198" stop-color="#0302ff"/><stop offset="0.676" stop-color="#8100ff"/><stop offset="1" stop-color="#ec00ff"/></linearGradient>
<linearGradient id="c156" gradientUnits="userSpaceOnUse" x1="792" x2="895" y1="0" y2="0"><stop offset="0" stop-color="#000aff"/><stop offset="0.194" stop-color="#0400ff"/><stop offset="0.709" stop-color="#8200ff"/><stop offset="1" stop-color="#d900ff"/></linearGradient>
<linearGradient id="c157" gradientUnits="userSpaceOnUse" x1="793" x2="889" y1="0" y2="0"><stop offset="0" stop-color="#0007ff"/><stop offset="0.188" stop-color="#0400ff"/><stop offset="0.75" stop-color="#8300ff"/><stop offset="1" stop-color="#c600ff"/></linearGradient>
<linearGradient id="c158" gradientUnits="userSpaceOnUse" x1="795" x2="883" y1="0" y2="0"><stop offset="0" stop-color="#0003ff"/><stop offset="0.17" stop-color="#0300ff"/><stop offset="0.784" stop-color="#8100ff"/><stop offset="1" stop-color="#b500ff"/></linearGradient>
<linearGradient id="c159" gradientUnits="userSpaceOnUse" x1="797" x2="877" y1="0" y2="0"><stop offset="0" stop-color="#00f"/><stop offset="0.163" stop-color="#0500ff"/><stop offset="0.85" stop-color="#8400ff"/><stop offset="1" stop-color="#a400ff"/></linearGradient>
<linearGradient id="c160" gradientUnits="userSpaceOnUse" x1="798" x2="871" y1="0" y2="0"><stop offset="0" stop-color="#00f"/><stop offset="0.151" stop-color="#0400ff"/><stop offset="0.904" stop-color="#8200ff"/><stop offset="1" stop-color="#9400ff"/></linearGradient>
<linearGradient id="c161" gradientUnits="userSpaceOnUse" x1="800" x2="865" y1="0" y2="0"><stop offset="0" stop-color="#00f"/><stop offset="0.138" stop-color="#0600ff"/><stop offset="1" stop-color="#8500ff"/></linearGradient>
<linearGradient id="c162" gradientUnits="userSpaceOnUse" x1="802" x2="860" y1="0" y2="0"><stop offset="0" stop-color="#00f"/><stop offset="0.155" stop-color="#0b00ff"/><stop offset="1" stop-color="#7900ff"/></linearGradient>
<linearGradient id="c163" gradientUnits="userSpaceOnUse" x1="805" x2="854" y1="0" y2="0"><stop offset="0" stop-color="#0100ff"/><stop offset="1" stop-color="#6b00ff"/></linearGradient>
<linearGradient id="c164" gradientUnits="userSpaceOnUse" x1="808" x2="848" y1="0" y2="0"><stop offset="0" stop-color="#0800ff"/><stop offset="1" stop-color="#5e00ff"/></linearGradient>
<linearGradient id="c165" gradientUnits="userSpaceOnUse" x1="811" x2="842" y1="0" y2="0"><stop offset="0" stop-color="#0f00ff"/><stop offset="1" stop-color="#5100ff"/></linearGradient>
<linearGradient id="c166" gradientUnits="userSpaceOnUse" x1="814" x2="836" y1="0" y2="0"><stop offset="0" stop-color="#1700ff"/><stop offset="1" stop-color="#4500ff"/></linearGradient>
<linearGradient id="c167" gradientUnits="userSpaceOnUse" x1="817" x2="830" y1="0" y2="0"><stop offset="0" stop-color="#1e00ff"/><stop offset="1" stop-color="#3900ff"/></linearGradient>
<linearGradient id="i0" gradientUnits="userSpaceOnUse" x1="1026" x2="1190" y1="0" y2="0"><stop offset="0" stop-color="#86ffcf"/><stop offset="0.768" stop-color="#faffca"/><stop offset="0.854" stop-color="#fff5c2"/><stop offset="1" stop-color="#ffe0b0"/></linearGradient>
<linearGradient id="i1" gradientUnits="userSpaceOnUse" x1="1026" x2="1190" y1="0" y2="0"><stop offset="0" stop-color="#88ffd1"/><stop offset="0.762" stop-color="#fcffcd"/><stop offset="1" stop-color="#ffdeb0"/></linearGradient>
<linearGradient id="i2" gradientUnits="userSpaceOnUse" x1="1026" x2="1190" y1="0" y2="0"><stop offset="0" stop-color="#8affd3"/><stop offset="0.78" stop-color="#fffdcd"/><stop offset="1" stop-color="#ffdcb1"/></linearGradient>
<linearGradient id="i3" gradientUnits="userSpaceOnUse" x1="1026" x2="1190" y1="0" y2="0"><stop offset="0" stop-color="#8bffd6"/><stop offset="0.768" stop-color="#fffccf"/><stop offset="1" stop-color="#ffdab1"/></linearGradient>
<linearGradient id="i4" gradientUnits="userSpaceOnUse" x1="1026" x2="1190" y1="0" y2="0"><stop offset="0" stop-color="#8dffd8"/><stop offset="0.75" stop-color="#fffdd2"/><stop offset="1" stop-color="#ffd7b2"/></linearGradient>
<linearGradient id="i5" gradientUnits="userSpaceOnUse" x1="1026" x2="1190" y1="0" y2="0"><stop offset="0" stop-color="#8effda"/><stop offset="0.738" stop-color="#fffcd4"/><stop offset="1" stop-color="#ffd5b2"/></linearGradient>
<linearGradient id="i6" gradientUnits="userSpaceOnUse" x1="1026" x2="1190" y1="0" y2="0"><stop offset="0" stop-color="#90ffdc"/><stop offset="0.72" stop-color="#fffdd7"/><stop offset="1" stop-color="#ffd3b2"/></linearGradient>
<linearGradient id="i7" gradientUnits="userSpaceOnUse" x1="1026" x2="1190" y1="0" y2="0"><stop offset="0" stop-color="#92ffdf"/><stop offset="0.707" stop-color="#fffdd9"/><stop offset="1" stop-color="#ffd1b3"/></linearGradient>
<linearGradient id="i8" gradientUnits="userSpaceOnUse" x1="1026" x2="1190" y1="0" y2="0"><stop offset="0" stop-color="#93ffe1"/><stop offset="0.695" stop-color="#fffcdc"/><stop offset="1" stop-color="#ffcfb3"/></linearGradient>
<linearGradient id="i9" gradientUnits="userSpaceOnUse" x1="1026" x2="1190" y1="0" y2="0"><stop offset="0" stop-color="#95ffe3"/><stop offset="0.677" stop-color="#fffddf"/><stop offset="1" stop-color="#ffcdb4"/></linearGradient>
<linearGradient id="i10" gradientUnits="userSpaceOnUse" x1="1026" x2="1190" y1="0" y2="0"><stop offset="0" stop-color="#97ffe6"/><stop offset="0.665" stop-color="#fffce1"/><stop offset="1" stop-color="#ffcbb4"/></linearGradient>
<linearGradient id="i11" gradientUnits="userSpaceOnUse" x1="1026" x2="1190" y1="0" y2="0"><stop offset="0" stop-color="#99ffe8"/><stop offset="0.646" stop-color="#fffde4"/><stop offset="1" stop-color="#ffc9b4"/></linearGradient>
<linearGradient id="i12" gradientUnits="userSpaceOnUse" x1="1026" x2="1190" y1="0" y2="0"><stop offset="0" stop-color="#9affea"/><stop offset="0.634" stop-color="#fffce6"/><stop offset="1" stop-color="#ffc7b5"/></linearGradient>
<linearGradient id="i13" gradientUnits="userSpaceOnUse" x1="1026" x2="1190" y1="0" y2="0"><stop offset="0" stop-color="#9cffed"/><stop offset="0.622" stop-color="#fffce9"/><stop offset="1" stop-color="#ffc5b5"/></linearGradient>
<linearGradient id="i14" gradientUnits="userSpaceOnUse" x1="1026" x2="1190" y1="0" y2="0"><stop offset="0" stop-color="#9effef"/><stop offset="0.604" stop-color="#fffdec"/><stop offset="1" stop-color="#ffc3b6"/></linearGradient>
<linearGradient id="i15" gradientUnits="userSpaceOnUse" x1="1026" x2="1190" y1="0" y2="0"><stop offset="0" stop-color="#a0fff2"/><stop offset="0.591" stop-color="#fffcee"/><stop offset="1" stop-color="#ffc1b6"/></linearGradient>
<linearGradient id="i16" gradientUnits="userSpaceOnUse" x1="1026" x2="1190" y1="0" y2="0"><stop offset="0" stop-color="#a2fff4"/><stop offset="0.573" stop-color="#fffdf2"/><stop offset="0.976" stop-color="#ffc2b9"/><stop offset="1" stop-color="#ffbfb6"/></linearGradient>
<linearGradient id="i17" gradientUnits="userSpaceOnUse" x1="1026" x2="1190" y1="0" y2="0"><stop offset="0" stop-color="#a4fff7"/><stop offset="0.561" stop-color="#fffcf4"/><stop offset="0.963" stop-color="#ffc2bb"/><stop offset="1" stop-color="#ffbdb7"/></linearGradient>
<linearGradient id="i18" gradientUnits="userSpaceOnUse" x1="1026" x2="1190" y1="0" y2="0"><stop offset="0" stop-color="#a5fffa"/><stop offset="0.549" stop-color="#fffcf6"/><stop offset="0.951" stop-color="#ffc1bd"/><stop offset="1" stop-color="#ffbcb7"/></linearGradient>
<linearGradient id="i19" gradientUnits="userSpaceOnUse" x1="1026" x2="1190" y1="0" y2="0"><stop offset="0" stop-color="#a7fffc"/><stop offset="0.53" stop-color="#fffdfa"/><stop offset="0.927" stop-color="#ffc2c0"/><stop offset="1" stop-color="#ffbab8"/></linearGradient>
<linearGradient id="i20" gradientUnits="userSpaceOnUse" x1="1026" x2="1190" y1="0" y2="0"><stop offset="0" stop-color="#a9ffff"/><stop offset="0.518" stop-color="#fffcfc"/><stop offset="0.915" stop-color="#ffc2c2"/><stop offset="1" stop-color="#ffb8b8"/></linearGradient>
<linearGradient id="i21" gradientUnits="userSpaceOnUse" x1="1026" x2="1190" y1="0" y2="0"><stop offset="0" stop-color="#aafcff"/><stop offset="0.518" stop-color="#fff9fc"/><stop offset="0.921" stop-color="#ffbfc1"/><stop offset="1" stop-color="#ffb6b8"/></linearGradient>
<linearGradient id="i22" gradientUnits="userSpaceOnUse" x1="1026" x2="1190" y1="0" y2="0"><stop offset="0" stop-color="#aafaff"/><stop offset="0.518" stop-color="#fff7fd"/><stop offset="0.921" stop-color="#ffbdc2"/><stop offset="1" stop-color="#ffb4b9"/></linearGradient>
<linearGradient id="i23" gradientUnits="userSpaceOnUse" x1="1026" x2="1190" y1="0" y2="0"><stop offset="0" stop-color="#aaf7ff"/><stop offset="0.518" stop-color="#fff4fd"/><stop offset="0.921" stop-color="#ffbbc2"/><stop offset="1" stop-color="#ffb2b9"/></linearGradient>
<linearGradient id="i24" gradientUnits="userSpaceOnUse" x1="1026" x2="1190" y1="0" y2="0"><stop offset="0" stop-color="#aaf4ff"/><stop offset="0.524" stop-color="#fff1fc"/><stop offset="0.933" stop-color="#ffb8c1"/><stop offset="1" stop-color="#ffb0b9"/></linearGradient>
<linearGradient id="i25" gradientUnits="userSpaceOnUse" x1="1026" x2="1190" y1="0" y2="0"><stop offset="0" stop-color="#aaf2ff"/><stop offset="0.524" stop-color="#ffeefc"/><stop offset="0.933" stop-color="#ffb6c1"/><stop offset="1" stop-color="#ffaeba"/></linearGradient>
<linearGradient id="i26" gradientUnits="userSpaceOnUse" x1="1026" x2="1190" y1="0" y2="0"><stop offset="0" stop-color="#aaefff"/><stop offset="0.524" stop-color="#ffebfc"/><stop offset="0.933" stop-color="#ffb4c2"/><stop offset="1" stop-color="#ffadba"/></linearGradient>
<linearGradient id="i27" gradientUnits="userSpaceOnUse" x1="1026" x2="1190" y1="0" y2="0"><stop offset="0" stop-color="#abedff"/><stop offset="0.524" stop-color="#ffe9fd"/><stop offset="0.933" stop-color="#ffb2c2"/><stop offset="1" stop-color="#ffabbb"/></linearGradient>
<linearGradient id="i28" gradientUnits="userSpaceOnUse" x1="1026" x2="1190" y1="0" y2="0"><stop offset="0" stop-color="#abeaff"/><stop offset="0.524" stop-color="#ffe6fd"/><stop offset="0.939" stop-color="#ffafc2"/><stop offset="1" stop-color="#ffa9bb"/></linearGradient>
<linearGradient id="i29" gradientUnits="userSpaceOnUse" x1="1026" x2="1190" y1="0" y2="0"><stop offset="0" stop-color="#abe8ff"/><stop offset="0.53" stop-color="#ffe3fc"/><stop offset="0.945" stop-color="#ffadc1"/><stop offset="1" stop-color="#ffa7bb"/></linearGradient>
<linearGradient id="i30" gradientUnits="userSpaceOnUse" x1="1026" x2="1190" y1="0" y2="0"><stop offset="0" stop-color="#abe5ff"/><stop offset="0.53" stop-color="#ffe1fc"/><stop offset="0.945" stop-color="#ffabc2"/><stop offset="1" stop-color="#ffa5bc"/></linearGradient>
<linearGradient id="i31" gradientUnits="userSpaceOnUse" x1="1026" x2="1190" y1="0" y2="0"><stop offset="0" stop-color="#abe3ff"/><stop offset="0.53" stop-color="#ffdefc"/><stop offset="0.951" stop-color="#ffa9c1"/><stop offset="1" stop-color="#ffa4bc"/></linearGradient>
<linearGradient id="i32" gradientUnits="userSpaceOnUse" x1="1026" x2="1190" y1="0" y2="0"><stop offset="0" stop-color="#abe0ff"/><stop offset="0.53" stop-color="#ffdcfd"/><stop offset="0.951" stop-color="#ffa7c2"/><stop offset="1" stop-color="#ffa2bc"/></linearGradient>
<linearGradient id="i33" gradientUnits="userSpaceOnUse" x1="1026" x2="1190" y1="0" y2="0"><stop offset="0" stop-color="#acdeff"/><stop offset="0.53" stop-color="#ffd9fd"/><stop offset="0.951" stop-color="#ffa5c2"/><stop offset="1" stop-color="#ffa0bd"/></linearGradient>
<linearGradient id="i34" gradientUnits="userSpaceOnUse" x1="1026" x2="1190" y1="0" y2="0"><stop offset="0" stop-color="#acdcff"/><stop offset="0.537" stop-color="#ffd6fc"/><stop offset="0.963" stop-color="#ffa2c1"/><stop offset="1" stop-color="#ff9ebd"/></linearGradient>
<linearGradient id="i35" gradientUnits="userSpaceOnUse" x1="1026" x2="1190" y1="0" y2="0"><stop offset="0" stop-color="#acd9ff"/><stop offset="0.537" stop-color="#ffd4fc"/><stop offset="0.963" stop-color="#ffa0c1"/><stop offset="1" stop-color="#ff9dbd"/></linearGradient>
<linearGradient id="i36" gradientUnits="userSpaceOnUse" x1="1026" x2="1190" y1="0" y2="0"><stop offset="0" stop-color="#acd7ff"/><stop offset="0.537" stop-color="#ffd1fc"/><stop offset="0.963" stop-color="#ff9ec2"/><stop offset="1" stop-color="#ff9bbe"/></linearGradient>
<linearGradient id="i37" gradientUnits="userSpaceOnUse" x1="1026" x2="1190" y1="0" y2="0"><stop offset="0" stop-color="#acd4ff"/><stop offset="0.537" stop-color="#ffcffd"/><stop offset="0.963" stop-color="#ff9dc2"/><stop offset="1" stop-color="#ff99be"/></linearGradient>
<linearGradient id="i38" gradientUnits="userSpaceOnUse" x1="1026" x2="1190" y1="0" y2="0"><stop offset="0" stop-color="#acd2ff"/><stop offset="0.537" stop-color="#ffcdfd"/><stop offset="0.963" stop-color="#ff9bc2"/><stop offset="1" stop-color="#ff98be"/></linearGradient>
<linearGradient id="i39" gradientUnits="userSpaceOnUse" x1="1026" x2="1190" y1="0" y2="0"><stop offset="0" stop-color="#acd0ff"/><stop offset="0.543" stop-color="#ffcafc"/><stop offset="0.976" stop-color="#ff98c1"/><stop offset="1" stop-color="#ff96bf"/></linearGradient>
<linearGradient id="i40" gradientUnits="userSpaceOnUse" x1="1026" x2="1190" y1="0" y2="0"><stop offset="0" stop-color="#adcdff"/><stop offset="0.543" stop-color="#ffc7fc"/><stop offset="0.976" stop-color="#ff96c2"/><stop offset="1" stop-color="#ff94bf"/></linearGradient>
<linearGradient id="gH" x1="0" y1="0" x2="0" y2="1"><stop offset="0" stop-color="#202020"/><stop offset="0.1" stop-color="#1c1c1c"/><stop offset="0.46" stop-color="#181818"/><stop offset="0.52" stop-color="#080808"/><stop offset="0.6" stop-color="#202020"/><stop offset="1" stop-color="#262626"/></linearGradient>
<clipPath id="cpTab"><rect x="701" y="393" width="480" height="147"/></clipPath></defs><rect x="0" y="0" width="1200" height="540" fill="#333333"/>
<rect x="0" y="0" width="1200" height="1.1" fill="#272727"/>
<text x="18" y="37.6" font-size="25.4" textLength="126.4" lengthAdjust="spacingAndGlyphs" fill="#e8e8e8">Colorspace</text>
<rect x="34.5" y="80.6" width="182.5" height="303.8" fill="#222222"/>
<line x1="34.5" y1="118.4" x2="217" y2="118.4" stroke="#646464" stroke-width="1.3"/>
<line x1="34.5" y1="156.6" x2="217" y2="156.6" stroke="#646464" stroke-width="1.3"/>
<line x1="34.5" y1="194.4" x2="217" y2="194.4" stroke="#646464" stroke-width="1.3"/>
<line x1="34.5" y1="233" x2="217" y2="233" stroke="#646464" stroke-width="1.3"/>
<line x1="34.5" y1="270.6" x2="217" y2="270.6" stroke="#646464" stroke-width="1.3"/>
<line x1="34.5" y1="308.9" x2="217" y2="308.9" stroke="#646464" stroke-width="1.3"/>
<line x1="34.5" y1="347" x2="217" y2="347" stroke="#646464" stroke-width="1.3"/>
<rect x="53.6" y="233" width="47.6" height="83" fill="url(#gR)" stroke="#5a0a0a" stroke-width="1"/>
<rect x="102" y="217" width="48" height="16" fill="url(#gG)" stroke="#083808" stroke-width="1"/>
<rect x="150.6" y="147" width="47.8" height="86" fill="url(#gB)" stroke="#0a0a5a" stroke-width="1"/>
<line x1="34.5" y1="80.6" x2="217" y2="80.6" stroke="#8e8e8e" stroke-width="1.2"/>
<line x1="34.5" y1="384.4" x2="217" y2="384.4" stroke="#8e8e8e" stroke-width="1.2"/>
<line x1="34.5" y1="80.6" x2="34.5" y2="384.4" stroke="#8e8e8e" stroke-width="1.2"/>
<line x1="217" y1="80.6" x2="217" y2="384.4" stroke="#6e6e6e" stroke-width="1"/>
<line x1="30.5" y1="80.6" x2="34.5" y2="80.6" stroke="#8e8e8e" stroke-width="1"/>
<text x="30" y="84.5" font-size="10" text-anchor="end" fill="#e8e8e8">20</text>
<line x1="30.5" y1="118.4" x2="34.5" y2="118.4" stroke="#8e8e8e" stroke-width="1"/>
<text x="30" y="122.3" font-size="10" text-anchor="end" fill="#e8e8e8">15</text>
<line x1="30.5" y1="156.6" x2="34.5" y2="156.6" stroke="#8e8e8e" stroke-width="1"/>
<text x="30" y="160.5" font-size="10" text-anchor="end" fill="#e8e8e8">10</text>
<line x1="30.5" y1="194.4" x2="34.5" y2="194.4" stroke="#8e8e8e" stroke-width="1"/>
<text x="30" y="198.3" font-size="10" text-anchor="end" fill="#e8e8e8">5</text>
<line x1="30.5" y1="233" x2="34.5" y2="233" stroke="#8e8e8e" stroke-width="1"/>
<text x="30" y="236.9" font-size="10" text-anchor="end" fill="#e8e8e8">0</text>
<line x1="30.5" y1="270.6" x2="34.5" y2="270.6" stroke="#8e8e8e" stroke-width="1"/>
<text x="30" y="274.5" font-size="10" text-anchor="end" fill="#e8e8e8">-5</text>
<line x1="30.5" y1="308.9" x2="34.5" y2="308.9" stroke="#8e8e8e" stroke-width="1"/>
<text x="30" y="312.8" font-size="10" text-anchor="end" fill="#e8e8e8">-10</text>
<line x1="30.5" y1="347" x2="34.5" y2="347" stroke="#8e8e8e" stroke-width="1"/>
<text x="30" y="350.9" font-size="10" text-anchor="end" fill="#e8e8e8">-15</text>
<line x1="30.5" y1="384.4" x2="34.5" y2="384.4" stroke="#8e8e8e" stroke-width="1"/>
<text x="30" y="388.3" font-size="10" text-anchor="end" fill="#e8e8e8">-20</text>
<line x1="34.5" y1="384.4" x2="34.5" y2="388.4" stroke="#8e8e8e" stroke-width="1"/>
<line x1="217" y1="384.4" x2="217" y2="388.4" stroke="#8e8e8e" stroke-width="1"/>
<text x="125.8" y="395.6" font-size="10" text-anchor="middle" textLength="27.6" lengthAdjust="spacingAndGlyphs" fill="#e8e8e8">White</text>
<text x="115.9" y="76.8" font-size="10.3" text-anchor="middle" textLength="59" lengthAdjust="spacingAndGlyphs" fill="#e8e8e8">RGB Balance</text>
<rect x="283.6" y="31" width="100" height="214" fill="#222222"/>
<line x1="283.6" y1="102.55" x2="383.6" y2="102.55" stroke="#585858" stroke-width="1.1"/>
<line x1="283.6" y1="173.85" x2="383.6" y2="173.85" stroke="#585858" stroke-width="1.1"/>
<line x1="283.6" y1="138.2" x2="383.6" y2="138.2" stroke="#686868" stroke-width="1.2"/>
<line x1="283.6" y1="66.9" x2="383.6" y2="66.9" stroke="#b8323c" stroke-width="1.7"/>
<line x1="283.6" y1="209.5" x2="383.6" y2="209.5" stroke="#a02428" stroke-width="1.1"/>
<line x1="283.6" y1="116.81" x2="383.6" y2="116.81" stroke="#c8c82a" stroke-width="1.4"/>
<line x1="283.6" y1="159.59" x2="383.6" y2="159.59" stroke="#c8c82a" stroke-width="1.4"/>
<line x1="283.6" y1="131.07" x2="383.6" y2="131.07" stroke="#1f5a2a" stroke-width="1.3"/>
<line x1="283.6" y1="145.33" x2="383.6" y2="145.33" stroke="#1f5a2a" stroke-width="1.3"/>
<line x1="283.6" y1="31" x2="383.6" y2="31" stroke="#8e8e8e" stroke-width="1.2"/>
<line x1="283.6" y1="245" x2="383.6" y2="245" stroke="#8e8e8e" stroke-width="1.2"/>
<line x1="283.6" y1="31" x2="283.6" y2="245" stroke="#8e8e8e" stroke-width="1.2"/>
<line x1="383.6" y1="31" x2="383.6" y2="245" stroke="#6e6e6e" stroke-width="1"/>
<line x1="279.6" y1="31.25" x2="283.6" y2="31.25" stroke="#8e8e8e" stroke-width="1"/>
<text x="279" y="34.95" font-size="10" text-anchor="end" fill="#e8e8e8">15</text>
<line x1="279.6" y1="66.9" x2="283.6" y2="66.9" stroke="#8e8e8e" stroke-width="1"/>
<text x="279" y="70.6" font-size="10" text-anchor="end" fill="#e8e8e8">10</text>
<line x1="279.6" y1="102.55" x2="283.6" y2="102.55" stroke="#8e8e8e" stroke-width="1"/>
<text x="279" y="106.25" font-size="10" text-anchor="end" fill="#e8e8e8">5</text>
<line x1="279.6" y1="138.2" x2="283.6" y2="138.2" stroke="#8e8e8e" stroke-width="1"/>
<text x="279" y="141.9" font-size="10" text-anchor="end" fill="#e8e8e8">0</text>
<line x1="279.6" y1="173.85" x2="283.6" y2="173.85" stroke="#8e8e8e" stroke-width="1"/>
<text x="279" y="177.55" font-size="10" text-anchor="end" fill="#e8e8e8">-5</text>
<line x1="279.6" y1="209.5" x2="283.6" y2="209.5" stroke="#8e8e8e" stroke-width="1"/>
<text x="279" y="213.2" font-size="10" text-anchor="end" fill="#e8e8e8">-10</text>
<line x1="279.6" y1="245.15" x2="283.6" y2="245.15" stroke="#8e8e8e" stroke-width="1"/>
<text x="279" y="248.85" font-size="10" text-anchor="end" fill="#e8e8e8">-15</text>
<line x1="283.6" y1="245" x2="283.6" y2="249" stroke="#8e8e8e" stroke-width="1"/>
<line x1="383.6" y1="245" x2="383.6" y2="249" stroke="#8e8e8e" stroke-width="1"/>
<text x="333.6" y="255.4" font-size="10" text-anchor="middle" textLength="28" lengthAdjust="spacingAndGlyphs" fill="#e8e8e8">White</text>
<text x="323.9" y="27.6" font-size="10.3" text-anchor="middle" textLength="29" lengthAdjust="spacingAndGlyphs" fill="#e8e8e8">DeltaL</text>
<rect x="421" y="31" width="99.4" height="214" fill="#222222"/>
<line x1="421" y1="102.55" x2="520.4" y2="102.55" stroke="#585858" stroke-width="1.1"/>
<line x1="421" y1="173.85" x2="520.4" y2="173.85" stroke="#585858" stroke-width="1.1"/>
<line x1="421" y1="138.2" x2="520.4" y2="138.2" stroke="#686868" stroke-width="1.2"/>
<rect x="431.6" y="88" width="77.4" height="50.2" fill="url(#gW1)"/>
<line x1="421" y1="66.9" x2="520.4" y2="66.9" stroke="#b8323c" stroke-width="1.7"/>
<line x1="421" y1="209.5" x2="520.4" y2="209.5" stroke="#a02428" stroke-width="1.1"/>
<line x1="421" y1="116.81" x2="520.4" y2="116.81" stroke="#c8c82a" stroke-width="1.4"/>
<line x1="421" y1="159.59" x2="520.4" y2="159.59" stroke="#c8c82a" stroke-width="1.4"/>
<line x1="421" y1="131.07" x2="520.4" y2="131.07" stroke="#1f5a2a" stroke-width="1.3"/>
<line x1="421" y1="145.33" x2="520.4" y2="145.33" stroke="#1f5a2a" stroke-width="1.3"/>
<line x1="421" y1="31" x2="520.4" y2="31" stroke="#8e8e8e" stroke-width="1.2"/>
<line x1="421" y1="245" x2="520.4" y2="245" stroke="#8e8e8e" stroke-width="1.2"/>
<line x1="421" y1="31" x2="421" y2="245" stroke="#8e8e8e" stroke-width="1.2"/>
<line x1="520.4" y1="31" x2="520.4" y2="245" stroke="#6e6e6e" stroke-width="1"/>
<line x1="417" y1="31.25" x2="421" y2="31.25" stroke="#8e8e8e" stroke-width="1"/>
<text x="416.4" y="34.95" font-size="10" text-anchor="end" fill="#e8e8e8">15</text>
<line x1="417" y1="66.9" x2="421" y2="66.9" stroke="#8e8e8e" stroke-width="1"/>
<text x="416.4" y="70.6" font-size="10" text-anchor="end" fill="#e8e8e8">10</text>
<line x1="417" y1="102.55" x2="421" y2="102.55" stroke="#8e8e8e" stroke-width="1"/>
<text x="416.4" y="106.25" font-size="10" text-anchor="end" fill="#e8e8e8">5</text>
<line x1="417" y1="138.2" x2="421" y2="138.2" stroke="#8e8e8e" stroke-width="1"/>
<text x="416.4" y="141.9" font-size="10" text-anchor="end" fill="#e8e8e8">0</text>
<line x1="417" y1="173.85" x2="421" y2="173.85" stroke="#8e8e8e" stroke-width="1"/>
<text x="416.4" y="177.55" font-size="10" text-anchor="end" fill="#e8e8e8">-5</text>
<line x1="417" y1="209.5" x2="421" y2="209.5" stroke="#8e8e8e" stroke-width="1"/>
<text x="416.4" y="213.2" font-size="10" text-anchor="end" fill="#e8e8e8">-10</text>
<line x1="417" y1="245.15" x2="421" y2="245.15" stroke="#8e8e8e" stroke-width="1"/>
<text x="416.4" y="248.85" font-size="10" text-anchor="end" fill="#e8e8e8">-15</text>
<line x1="421" y1="245" x2="421" y2="249" stroke="#8e8e8e" stroke-width="1"/>
<line x1="520.4" y1="245" x2="520.4" y2="249" stroke="#8e8e8e" stroke-width="1"/>
<text x="470.7" y="255.4" font-size="10" text-anchor="middle" textLength="28" lengthAdjust="spacingAndGlyphs" fill="#e8e8e8">White</text>
<text x="460.2" y="27.6" font-size="10.3" text-anchor="middle" textLength="29" lengthAdjust="spacingAndGlyphs" fill="#e8e8e8">DeltaC</text>
<rect x="558" y="31" width="99.6" height="214" fill="#222222"/>
<line x1="558" y1="102.55" x2="657.6" y2="102.55" stroke="#585858" stroke-width="1.1"/>
<line x1="558" y1="173.85" x2="657.6" y2="173.85" stroke="#585858" stroke-width="1.1"/>
<line x1="558" y1="138.2" x2="657.6" y2="138.2" stroke="#686868" stroke-width="1.2"/>
<line x1="558" y1="66.9" x2="657.6" y2="66.9" stroke="#b8323c" stroke-width="1.7"/>
<line x1="558" y1="209.5" x2="657.6" y2="209.5" stroke="#a02428" stroke-width="1.1"/>
<line x1="558" y1="116.81" x2="657.6" y2="116.81" stroke="#c8c82a" stroke-width="1.4"/>
<line x1="558" y1="159.59" x2="657.6" y2="159.59" stroke="#c8c82a" stroke-width="1.4"/>
<line x1="558" y1="131.07" x2="657.6" y2="131.07" stroke="#1f5a2a" stroke-width="1.3"/>
<line x1="558" y1="145.33" x2="657.6" y2="145.33" stroke="#1f5a2a" stroke-width="1.3"/>
<line x1="558" y1="31" x2="657.6" y2="31" stroke="#8e8e8e" stroke-width="1.2"/>
<line x1="558" y1="245" x2="657.6" y2="245" stroke="#8e8e8e" stroke-width="1.2"/>
<line x1="558" y1="31" x2="558" y2="245" stroke="#8e8e8e" stroke-width="1.2"/>
<line x1="657.6" y1="31" x2="657.6" y2="245" stroke="#6e6e6e" stroke-width="1"/>
<line x1="554" y1="31.25" x2="558" y2="31.25" stroke="#8e8e8e" stroke-width="1"/>
<text x="553.4" y="34.95" font-size="10" text-anchor="end" fill="#e8e8e8">15</text>
<line x1="554" y1="66.9" x2="558" y2="66.9" stroke="#8e8e8e" stroke-width="1"/>
<text x="553.4" y="70.6" font-size="10" text-anchor="end" fill="#e8e8e8">10</text>
<line x1="554" y1="102.55" x2="558" y2="102.55" stroke="#8e8e8e" stroke-width="1"/>
<text x="553.4" y="106.25" font-size="10" text-anchor="end" fill="#e8e8e8">5</text>
<line x1="554" y1="138.2" x2="558" y2="138.2" stroke="#8e8e8e" stroke-width="1"/>
<text x="553.4" y="141.9" font-size="10" text-anchor="end" fill="#e8e8e8">0</text>
<line x1="554" y1="173.85" x2="558" y2="173.85" stroke="#8e8e8e" stroke-width="1"/>
<text x="553.4" y="177.55" font-size="10" text-anchor="end" fill="#e8e8e8">-5</text>
<line x1="554" y1="209.5" x2="558" y2="209.5" stroke="#8e8e8e" stroke-width="1"/>
<text x="553.4" y="213.2" font-size="10" text-anchor="end" fill="#e8e8e8">-10</text>
<line x1="554" y1="245.15" x2="558" y2="245.15" stroke="#8e8e8e" stroke-width="1"/>
<text x="553.4" y="248.85" font-size="10" text-anchor="end" fill="#e8e8e8">-15</text>
<line x1="558" y1="245" x2="558" y2="249" stroke="#8e8e8e" stroke-width="1"/>
<line x1="657.6" y1="245" x2="657.6" y2="249" stroke="#8e8e8e" stroke-width="1"/>
<text x="607.8" y="255.4" font-size="10" text-anchor="middle" textLength="28" lengthAdjust="spacingAndGlyphs" fill="#e8e8e8">White</text>
<text x="598.1" y="27.6" font-size="10.3" text-anchor="middle" textLength="32" lengthAdjust="spacingAndGlyphs" fill="#e8e8e8">DeltaH</text>
<rect x="236" y="262.7" width="459.7" height="106.8" fill="#000"/>
<rect x="248.9" y="267.5" width="47.4" height="37.6" fill="#e8f4ff" stroke="#d8d8d8" stroke-opacity=".75" stroke-width="1"/>
<rect x="248.9" y="316.5" width="47.4" height="37.6" fill="#f2f2f2" stroke="#d8d8d8" stroke-opacity=".75" stroke-width="1"/>
<text x="272.9" y="364.6" font-size="9.1" text-anchor="middle" fill="#e8e8e8">White</text>
<rect x="305.18" y="267.5" width="47.4" height="37.6" fill="#e63030" stroke="#d8d8d8" stroke-opacity=".75" stroke-width="1"/>
<rect x="305.18" y="316.5" width="47.4" height="37.6" fill="#ff0028" stroke="#d8d8d8" stroke-opacity=".75" stroke-width="1"/>
<text x="329.18" y="364.6" font-size="9.1" text-anchor="middle" fill="#e8e8e8">Red</text>
<rect x="361.46" y="267.5" width="47.4" height="37.6" fill="#50e870" stroke="#d8d8d8" stroke-opacity=".75" stroke-width="1"/>
<rect x="361.46" y="316.5" width="47.4" height="37.6" fill="#00ff50" stroke="#d8d8d8" stroke-opacity=".75" stroke-width="1"/>
<text x="385.46" y="364.6" font-size="9.1" text-anchor="middle" fill="#e8e8e8">Green</text>
<rect x="417.74" y="267.5" width="47.4" height="37.6" fill="#2018f0" stroke="#d8d8d8" stroke-opacity=".75" stroke-width="1"/>
<rect x="417.74" y="316.5" width="47.4" height="37.6" fill="#0000ff" stroke="#d8d8d8" stroke-opacity=".75" stroke-width="1"/>
<text x="441.74" y="364.6" font-size="9.1" text-anchor="middle" fill="#e8e8e8">Blue</text>
<rect x="474.02" y="267.5" width="47.4" height="37.6" fill="#50f0f0" stroke="#d8d8d8" stroke-opacity=".75" stroke-width="1"/>
<rect x="474.02" y="316.5" width="47.4" height="37.6" fill="#00ffff" stroke="#d8d8d8" stroke-opacity=".75" stroke-width="1"/>
<text x="498.02" y="364.6" font-size="9.1" text-anchor="middle" fill="#e8e8e8">Cyan</text>
<rect x="530.3" y="267.5" width="47.4" height="37.6" fill="#e830e8" stroke="#d8d8d8" stroke-opacity=".75" stroke-width="1"/>
<rect x="530.3" y="316.5" width="47.4" height="37.6" fill="#ff00ff" stroke="#d8d8d8" stroke-opacity=".75" stroke-width="1"/>
<text x="554.3" y="364.6" font-size="9.1" text-anchor="middle" fill="#e8e8e8">Magenta</text>
<rect x="586.58" y="267.5" width="47.4" height="37.6" fill="#d0f048" stroke="#d8d8d8" stroke-opacity=".75" stroke-width="1"/>
<rect x="586.58" y="316.5" width="47.4" height="37.6" fill="#ffff00" stroke="#d8d8d8" stroke-opacity=".75" stroke-width="1"/>
<text x="610.58" y="364.6" font-size="9.1" text-anchor="middle" fill="#e8e8e8">Yellow</text>
<rect x="642.86" y="267.5" width="47.4" height="37.6" fill="#e8f4ff" stroke="#d8d8d8" stroke-opacity=".75" stroke-width="1"/>
<rect x="642.86" y="316.5" width="47.4" height="37.6" fill="#f2f2f2" stroke="#d8d8d8" stroke-opacity=".75" stroke-width="1"/>
<text x="666.86" y="364.6" font-size="9.1" text-anchor="middle" fill="#e8e8e8">100W</text>
<text transform="translate(246.2,286.3) rotate(-90)" font-size="8.6" text-anchor="middle" fill="#e8e8e8">Actual</text>
<text transform="translate(246.2,335.5) rotate(-90)" font-size="8.6" text-anchor="middle" fill="#e8e8e8">Target</text>
<rect x="256" y="391.4" width="425.4" height="133" fill="#222222"/>
<line x1="256" y1="480" x2="681.4" y2="480" stroke="#5c5848" stroke-width="1"/>
<rect x="261.6" y="464.993" width="40.4" height="59.4072" fill="url(#gE0)"/>
<text x="283" y="534.6" font-size="9.8" text-anchor="middle" fill="#e8e8e8" transform="translate(283 0) scale(1.13 1) translate(-283 0)">White</text>
<line x1="308.4" y1="524.4" x2="308.4" y2="528.4" stroke="#8e8e8e" stroke-width="1"/>
<rect x="314.8" y="494.386" width="40.4" height="30.0144" fill="url(#gE1)"/>
<text x="336.2" y="534.6" font-size="9.8" text-anchor="middle" fill="#e8e8e8" transform="translate(336.2 0) scale(1.13 1) translate(-336.2 0)">Red</text>
<line x1="361.6" y1="524.4" x2="361.6" y2="528.4" stroke="#8e8e8e" stroke-width="1"/>
<rect x="368" y="491.988" width="40.4" height="32.412" fill="url(#gE2)"/>
<text x="389.4" y="534.6" font-size="9.8" text-anchor="middle" fill="#e8e8e8" transform="translate(389.4 0) scale(1.13 1) translate(-389.4 0)">Green</text>
<line x1="414.8" y1="524.4" x2="414.8" y2="528.4" stroke="#8e8e8e" stroke-width="1"/>
<rect x="421.2" y="514.01" width="40.4" height="10.3896" fill="url(#gE3)"/>
<text x="442.6" y="534.6" font-size="9.8" text-anchor="middle" fill="#e8e8e8" transform="translate(442.6 0) scale(1.13 1) translate(-442.6 0)">Blue</text>
<line x1="468" y1="524.4" x2="468" y2="528.4" stroke="#8e8e8e" stroke-width="1"/>
<rect x="474.4" y="501.046" width="40.4" height="23.3544" fill="url(#gE4)"/>
<text x="495.8" y="534.6" font-size="9.8" text-anchor="middle" fill="#e8e8e8" transform="translate(495.8 0) scale(1.13 1) translate(-495.8 0)">Cyan</text>
<line x1="521.2" y1="524.4" x2="521.2" y2="528.4" stroke="#8e8e8e" stroke-width="1"/>
<rect x="527.6" y="503.621" width="40.4" height="20.7792" fill="url(#gE5)"/>
<text x="549" y="534.6" font-size="9.8" text-anchor="middle" fill="#e8e8e8" transform="translate(549 0) scale(1.13 1) translate(-549 0)">Magenta</text>
<line x1="574.4" y1="524.4" x2="574.4" y2="528.4" stroke="#8e8e8e" stroke-width="1"/>
<rect x="580.8" y="450.962" width="40.4" height="73.4376" fill="url(#gE6)"/>
<text x="602.2" y="534.6" font-size="9.8" text-anchor="middle" fill="#e8e8e8" transform="translate(602.2 0) scale(1.13 1) translate(-602.2 0)">Yellow</text>
<line x1="627.6" y1="524.4" x2="627.6" y2="528.4" stroke="#8e8e8e" stroke-width="1"/>
<rect x="634" y="464.993" width="40.4" height="59.4072" fill="url(#gE7)"/>
<text x="655.4" y="534.6" font-size="9.8" text-anchor="middle" fill="#e8e8e8" transform="translate(655.4 0) scale(1.13 1) translate(-655.4 0)">100W</text>
<line x1="680.8" y1="524.4" x2="680.8" y2="528.4" stroke="#8e8e8e" stroke-width="1"/>
<line x1="256" y1="435.6" x2="681.4" y2="435.6" stroke="#b8323c" stroke-width="1.7"/>
<line x1="256" y1="497.76" x2="681.4" y2="497.76" stroke="#c8c832" stroke-width="1.3" stroke-opacity=".8"/>
<line x1="256" y1="515.52" x2="681.4" y2="515.52" stroke="#4a8a3c" stroke-width="1.2" stroke-opacity=".75"/>
<line x1="256" y1="391.4" x2="681.4" y2="391.4" stroke="#8e8e8e" stroke-width="1.8"/>
<line x1="256" y1="524.4" x2="681.4" y2="524.4" stroke="#8e8e8e" stroke-width="1.2"/>
<line x1="256" y1="391.4" x2="256" y2="524.4" stroke="#8e8e8e" stroke-width="1.4"/>
<line x1="681.4" y1="391.4" x2="681.4" y2="524.4" stroke="#6e6e6e" stroke-width="1"/>
<line x1="252" y1="391.2" x2="256" y2="391.2" stroke="#8e8e8e" stroke-width="1"/>
<text x="251.2" y="394.9" font-size="10" text-anchor="end" fill="#e8e8e8">15</text>
<line x1="252" y1="435.6" x2="256" y2="435.6" stroke="#8e8e8e" stroke-width="1"/>
<text x="251.2" y="439.3" font-size="10" text-anchor="end" fill="#e8e8e8">10</text>
<line x1="252" y1="480" x2="256" y2="480" stroke="#8e8e8e" stroke-width="1"/>
<text x="251.2" y="483.7" font-size="10" text-anchor="end" fill="#e8e8e8">5</text>
<line x1="252" y1="524.4" x2="256" y2="524.4" stroke="#8e8e8e" stroke-width="1"/>
<text x="251.2" y="528.1" font-size="10" text-anchor="end" fill="#e8e8e8">0</text>
<text x="461" y="388" font-size="10.3" text-anchor="middle" textLength="57" lengthAdjust="spacingAndGlyphs" fill="#e8e8e8">DeltaE 2000</text>
<text x="11.6" y="418.4" font-size="18.8" textLength="156" lengthAdjust="spacingAndGlyphs" fill="#e8e8e8">Current Reading</text>
<text x="11" y="446.4" font-size="15.2" textLength="73" lengthAdjust="spacingAndGlyphs" fill="#e8e8e8">x: 0.2978</text>
<text x="11" y="473" font-size="15.2" textLength="74" lengthAdjust="spacingAndGlyphs" fill="#e8e8e8">y: 0.3199</text>
<text x="11.6" y="500" font-size="15.2" textLength="88.4" lengthAdjust="spacingAndGlyphs" fill="#e8e8e8">fL: 116.604</text>
<text x="11" y="526.4" font-size="15.2" textLength="124.2" lengthAdjust="spacingAndGlyphs" fill="#e8e8e8">cd/m²: 399.516</text>
<rect x="700" y="9.6" width="500" height="383.6" fill="#000"/>
<rect x="705.6" y="14.4" width="488.6" height="373.6" fill="#323232"/>
<rect x="727" y="29.5" width="465" height="340.1" fill="#222222"/>
<g clip-path="url(#cpH)"><rect x="759" y="31" width="27" height="2.5" fill="url(#c0)"/><rect x="754" y="33" width="39" height="2.5" fill="url(#c1)"/><rect x="750" y="35" width="50" height="2.5" fill="url(#c2)"/><rect x="748" y="37" width="57" height="2.5" fill="url(#c3)"/><rect x="746" y="39" width="64" height="2.5" fill="url(#c4)"/><rect x="744" y="41" width="71" height="2.5" fill="url(#c5)"/><rect x="743" y="43" width="76" height="2.5" fill="url(#c6)"/><rect x="741" y="45" width="83" height="2.5" fill="url(#c7)"/><rect x="740" y="47" width="88" height="2.5" fill="url(#c8)"/><rect x="739" y="49" width="93" height="2.5" fill="url(#c9)"/><rect x="738" y="51" width="98" height="2.5" fill="url(#c10)"/><rect x="737" y="53" width="103" height="2.5" fill="url(#c11)"/><rect x="736" y="55" width="108" height="2.5" fill="url(#c12)"/><rect x="735" y="57" width="112" height="2.5" fill="url(#c13)"/><rect x="734" y="59" width="117" height="2.5" fill="url(#c14)"/><rect x="733" y="61" width="121" height="2.5" fill="url(#c15)"/><rect x="733" y="63" width="125" height="2.5" fill="url(#c16)"/><rect x="732" y="65" width="129" height="2.5" fill="url(#c17)"/><rect x="732" y="67" width="133" height="2.5" fill="url(#c18)"/><rect x="731" y="69" width="137" height="2.5" fill="url(#c19)"/><rect x="731" y="71" width="140" height="2.5" fill="url(#c20)"/><rect x="730" y="73" width="144" height="2.5" fill="url(#c21)"/><rect x="730" y="75" width="147" height="2.5" fill="url(#c22)"/><rect x="730" y="77" width="151" height="2.5" fill="url(#c23)"/><rect x="729" y="79" width="155" height="2.5" fill="url(#c24)"/><rect x="729" y="81" width="158" height="2.5" fill="url(#c25)"/><rect x="729" y="83" width="161" height="2.5" fill="url(#c26)"/><rect x="728" y="85" width="165" height="2.5" fill="url(#c27)"/><rect x="728" y="87" width="168" height="2.5" fill="url(#c28)"/><rect x="728" y="89" width="171" height="2.5" fill="url(#c29)"/><rect x="728" y="91" width="174" height="2.5" fill="url(#c30)"/><rect x="728" y="93" width="177" height="2.5" fill="url(#c31)"/><rect x="728" y="95" width="180" height="2.5" fill="url(#c32)"/><rect x="728" y="97" width="182" height="2.5" fill="url(#c33)"/><rect x="728" y="99" width="185" height="2.5" fill="url(#c34)"/><rect x="728" y="101" width="188" height="2.5" fill="url(#c35)"/><rect x="728" y="103" width="191" height="2.5" fill="url(#c36)"/><rect x="728" y="105" width="194" height="2.5" fill="url(#c37)"/><rect x="728" y="107" width="197" height="2.5" fill="url(#c38)"/><rect x="728" y="109" width="200" height="2.5" fill="url(#c39)"/><rect x="728" y="111" width="203" height="2.5" fill="url(#c40)"/><rect x="728" y="113" width="205" height="2.5" fill="url(#c41)"/><rect x="728" y="115" width="208" height="2.5" fill="url(#c42)"/><rect x="728" y="117" width="211" height="2.5" fill="url(#c43)"/><rect x="728" y="119" width="214" height="2.5" fill="url(#c44)"/><rect x="728" y="121" width="217" height="2.5" fill="url(#c45)"/><rect x="728" y="123" width="219" height="2.5" fill="url(#c46)"/><rect x="728" y="125" width="222" height="2.5" fill="url(#c47)"/><rect x="728" y="127" width="225" height="2.5" fill="url(#c48)"/><rect x="728" y="129" width="228" height="2.5" fill="url(#c49)"/><rect x="728" y="131" width="230" height="2.5" fill="url(#c50)"/><rect x="728" y="133" width="233" height="2.5" fill="url(#c51)"/><rect x="728" y="135" width="236" height="2.5" fill="url(#c52)"/><rect x="728" y="137" width="239" height="2.5" fill="url(#c53)"/><rect x="728" y="139" width="242" height="2.5" fill="url(#c54)"/><rect x="729" y="141" width="243" height="2.5" fill="url(#c55)"/><rect x="729" y="143" width="246" height="2.5" fill="url(#c56)"/><rect x="729" y="145" width="249" height="2.5" fill="url(#c57)"/><rect x="729" y="147" width="252" height="2.5" fill="url(#c58)"/><rect x="729" y="149" width="254" height="2.5" fill="url(#c59)"/><rect x="730" y="151" width="256" height="2.5" fill="url(#c60)"/><rect x="730" y="153" width="259" height="2.5" fill="url(#c61)"/><rect x="730" y="155" width="262" height="2.5" fill="url(#c62)"/><rect x="730" y="157" width="264" height="2.5" fill="url(#c63)"/><rect x="731" y="159" width="266" height="2.5" fill="url(#c64)"/><rect x="731" y="161" width="269" height="2.5" fill="url(#c65)"/><rect x="731" y="163" width="272" height="2.5" fill="url(#c66)"/><rect x="731" y="165" width="274" height="2.5" fill="url(#c67)"/><rect x="732" y="167" width="276" height="2.5" fill="url(#c68)"/><rect x="732" y="169" width="279" height="2.5" fill="url(#c69)"/><rect x="732" y="171" width="282" height="2.5" fill="url(#c70)"/><rect x="733" y="173" width="283" height="2.5" fill="url(#c71)"/><rect x="733" y="175" width="286" height="2.5" fill="url(#c72)"/><rect x="733" y="177" width="289" height="2.5" fill="url(#c73)"/><rect x="734" y="179" width="291" height="2.5" fill="url(#c74)"/><rect x="734" y="181" width="293" height="2.5" fill="url(#c75)"/><rect x="734" y="183" width="296" height="2.5" fill="url(#c76)"/><rect x="735" y="185" width="298" height="2.5" fill="url(#c77)"/><rect x="735" y="187" width="301" height="2.5" fill="url(#c78)"/><rect x="735" y="189" width="303" height="2.5" fill="url(#c79)"/><rect x="736" y="191" width="305" height="2.5" fill="url(#c80)"/><rect x="736" y="193" width="308" height="2.5" fill="url(#c81)"/><rect x="737" y="195" width="310" height="2.5" fill="url(#c82)"/><rect x="737" y="197" width="312" height="2.5" fill="url(#c83)"/><rect x="737" y="199" width="315" height="2.5" fill="url(#c84)"/><rect x="738" y="201" width="317" height="2.5" fill="url(#c85)"/><rect x="738" y="203" width="320" height="2.5" fill="url(#c86)"/><rect x="739" y="205" width="321" height="2.5" fill="url(#c87)"/><rect x="739" y="207" width="324" height="2.5" fill="url(#c88)"/><rect x="740" y="209" width="326" height="2.5" fill="url(#c89)"/><rect x="740" y="211" width="329" height="2.5" fill="url(#c90)"/><rect x="741" y="213" width="330" height="2.5" fill="url(#c91)"/><rect x="741" y="215" width="333" height="2.5" fill="url(#c92)"/><rect x="741" y="217" width="336" height="2.5" fill="url(#c93)"/><rect x="742" y="219" width="338" height="2.5" fill="url(#c94)"/><rect x="742" y="221" width="340" height="2.5" fill="url(#c95)"/><rect x="743" y="223" width="342" height="2.5" fill="url(#c96)"/><rect x="743" y="225" width="345" height="2.5" fill="url(#c97)"/><rect x="744" y="227" width="347" height="2.5" fill="url(#c98)"/><rect x="744" y="229" width="349" height="2.5" fill="url(#c99)"/><rect x="745" y="231" width="351" height="2.5" fill="url(#c100)"/><rect x="746" y="233" width="353" height="2.5" fill="url(#c101)"/><rect x="746" y="235" width="356" height="2.5" fill="url(#c102)"/><rect x="747" y="237" width="357" height="2.5" fill="url(#c103)"/><rect x="747" y="239" width="360" height="2.5" fill="url(#c104)"/><rect x="748" y="241" width="362" height="2.5" fill="url(#c105)"/><rect x="748" y="243" width="365" height="2.5" fill="url(#c106)"/><rect x="749" y="245" width="366" height="2.5" fill="url(#c107)"/><rect x="749" y="247" width="369" height="2.5" fill="url(#c108)"/><rect x="750" y="249" width="371" height="2.5" fill="url(#c109)"/><rect x="751" y="251" width="373" height="2.5" fill="url(#c110)"/><rect x="751" y="253" width="375" height="2.5" fill="url(#c111)"/><rect x="752" y="255" width="377" height="2.5" fill="url(#c112)"/><rect x="752" y="257" width="380" height="2.5" fill="url(#c113)"/><rect x="753" y="259" width="381" height="2.5" fill="url(#c114)"/><rect x="754" y="261" width="380" height="2.5" fill="url(#c115)"/><rect x="754" y="263" width="375" height="2.5" fill="url(#c116)"/><rect x="755" y="265" width="369" height="2.5" fill="url(#c117)"/><rect x="756" y="267" width="362" height="2.5" fill="url(#c118)"/><rect x="756" y="269" width="356" height="2.5" fill="url(#c119)"/><rect x="757" y="271" width="349" height="2.5" fill="url(#c120)"/><rect x="758" y="273" width="342" height="2.5" fill="url(#c121)"/><rect x="758" y="275" width="336" height="2.5" fill="url(#c122)"/><rect x="759" y="277" width="329" height="2.5" fill="url(#c123)"/><rect x="760" y="279" width="323" height="2.5" fill="url(#c124)"/><rect x="761" y="281" width="316" height="2.5" fill="url(#c125)"/><rect x="761" y="283" width="310" height="2.5" fill="url(#c126)"/><rect x="762" y="285" width="303" height="2.5" fill="url(#c127)"/><rect x="763" y="287" width="296" height="2.5" fill="url(#c128)"/><rect x="764" y="289" width="289" height="2.5" fill="url(#c129)"/><rect x="764" y="291" width="283" height="2.5" fill="url(#c130)"/><rect x="765" y="293" width="276" height="2.5" fill="url(#c131)"/><rect x="766" y="295" width="270" height="2.5" fill="url(#c132)"/><rect x="767" y="297" width="263" height="2.5" fill="url(#c133)"/><rect x="768" y="299" width="256" height="2.5" fill="url(#c134)"/><rect x="769" y="301" width="249" height="2.5" fill="url(#c135)"/><rect x="770" y="303" width="242" height="2.5" fill="url(#c136)"/><rect x="771" y="305" width="235" height="2.5" fill="url(#c137)"/><rect x="772" y="307" width="228" height="2.5" fill="url(#c138)"/><rect x="773" y="309" width="222" height="2.5" fill="url(#c139)"/><rect x="774" y="311" width="215" height="2.5" fill="url(#c140)"/><rect x="775" y="313" width="208" height="2.5" fill="url(#c141)"/><rect x="776" y="315" width="201" height="2.5" fill="url(#c142)"/><rect x="777" y="317" width="194" height="2.5" fill="url(#c143)"/><rect x="778" y="319" width="187" height="2.5" fill="url(#c144)"/><rect x="779" y="321" width="180" height="2.5" fill="url(#c145)"/><rect x="780" y="323" width="173" height="2.5" fill="url(#c146)"/><rect x="781" y="325" width="167" height="2.5" fill="url(#c147)"/><rect x="782" y="327" width="160" height="2.5" fill="url(#c148)"/><rect x="783" y="329" width="153" height="2.5" fill="url(#c149)"/><rect x="784" y="331" width="146" height="2.5" fill="url(#c150)"/><rect x="785" y="333" width="139" height="2.5" fill="url(#c151)"/><rect x="786" y="335" width="132" height="2.5" fill="url(#c152)"/><rect x="788" y="337" width="124" height="2.5" fill="url(#c153)"/><rect x="789" y="339" width="118" height="2.5" fill="url(#c154)"/><rect x="790" y="341" width="111" height="2.5" fill="url(#c155)"/><rect x="792" y="343" width="103" height="2.5" fill="url(#c156)"/><rect x="793" y="345" width="96" height="2.5" fill="url(#c157)"/><rect x="795" y="347" width="88" height="2.5" fill="url(#c158)"/><rect x="797" y="349" width="80" height="2.5" fill="url(#c159)"/><rect x="798" y="351" width="73" height="2.5" fill="url(#c160)"/><rect x="800" y="353" width="65" height="2.5" fill="url(#c161)"/><rect x="802" y="355" width="58" height="2.5" fill="url(#c162)"/><rect x="805" y="357" width="49" height="2.5" fill="url(#c163)"/><rect x="808" y="359" width="40" height="2.5" fill="url(#c164)"/><rect x="811" y="361" width="31" height="2.5" fill="url(#c165)"/><rect x="814" y="363" width="22" height="2.5" fill="url(#c166)"/><rect x="817" y="365" width="13" height="2.5" fill="url(#c167)"/><rect x="720" y="20" width="430" height="360" fill="#000" fill-opacity="0.38"/></g>
<g clip-path="url(#cpH)"><g clip-path="url(#cpT)"><rect x="759" y="31" width="27" height="2.5" fill="url(#c0)"/><rect x="754" y="33" width="39" height="2.5" fill="url(#c1)"/><rect x="750" y="35" width="50" height="2.5" fill="url(#c2)"/><rect x="748" y="37" width="57" height="2.5" fill="url(#c3)"/><rect x="746" y="39" width="64" height="2.5" fill="url(#c4)"/><rect x="744" y="41" width="71" height="2.5" fill="url(#c5)"/><rect x="743" y="43" width="76" height="2.5" fill="url(#c6)"/><rect x="741" y="45" width="83" height="2.5" fill="url(#c7)"/><rect x="740" y="47" width="88" height="2.5" fill="url(#c8)"/><rect x="739" y="49" width="93" height="2.5" fill="url(#c9)"/><rect x="738" y="51" width="98" height="2.5" fill="url(#c10)"/><rect x="737" y="53" width="103" height="2.5" fill="url(#c11)"/><rect x="736" y="55" width="108" height="2.5" fill="url(#c12)"/><rect x="735" y="57" width="112" height="2.5" fill="url(#c13)"/><rect x="734" y="59" width="117" height="2.5" fill="url(#c14)"/><rect x="733" y="61" width="121" height="2.5" fill="url(#c15)"/><rect x="733" y="63" width="125" height="2.5" fill="url(#c16)"/><rect x="732" y="65" width="129" height="2.5" fill="url(#c17)"/><rect x="732" y="67" width="133" height="2.5" fill="url(#c18)"/><rect x="731" y="69" width="137" height="2.5" fill="url(#c19)"/><rect x="731" y="71" width="140" height="2.5" fill="url(#c20)"/><rect x="730" y="73" width="144" height="2.5" fill="url(#c21)"/><rect x="730" y="75" width="147" height="2.5" fill="url(#c22)"/><rect x="730" y="77" width="151" height="2.5" fill="url(#c23)"/><rect x="729" y="79" width="155" height="2.5" fill="url(#c24)"/><rect x="729" y="81" width="158" height="2.5" fill="url(#c25)"/><rect x="729" y="83" width="161" height="2.5" fill="url(#c26)"/><rect x="728" y="85" width="165" height="2.5" fill="url(#c27)"/><rect x="728" y="87" width="168" height="2.5" fill="url(#c28)"/><rect x="728" y="89" width="171" height="2.5" fill="url(#c29)"/><rect x="728" y="91" width="174" height="2.5" fill="url(#c30)"/><rect x="728" y="93" width="177" height="2.5" fill="url(#c31)"/><rect x="728" y="95" width="180" height="2.5" fill="url(#c32)"/><rect x="728" y="97" width="182" height="2.5" fill="url(#c33)"/><rect x="728" y="99" width="185" height="2.5" fill="url(#c34)"/><rect x="728" y="101" width="188" height="2.5" fill="url(#c35)"/><rect x="728" y="103" width="191" height="2.5" fill="url(#c36)"/><rect x="728" y="105" width="194" height="2.5" fill="url(#c37)"/><rect x="728" y="107" width="197" height="2.5" fill="url(#c38)"/><rect x="728" y="109" width="200" height="2.5" fill="url(#c39)"/><rect x="728" y="111" width="203" height="2.5" fill="url(#c40)"/><rect x="728" y="113" width="205" height="2.5" fill="url(#c41)"/><rect x="728" y="115" width="208" height="2.5" fill="url(#c42)"/><rect x="728" y="117" width="211" height="2.5" fill="url(#c43)"/><rect x="728" y="119" width="214" height="2.5" fill="url(#c44)"/><rect x="728" y="121" width="217" height="2.5" fill="url(#c45)"/><rect x="728" y="123" width="219" height="2.5" fill="url(#c46)"/><rect x="728" y="125" width="222" height="2.5" fill="url(#c47)"/><rect x="728" y="127" width="225" height="2.5" fill="url(#c48)"/><rect x="728" y="129" width="228" height="2.5" fill="url(#c49)"/><rect x="728" y="131" width="230" height="2.5" fill="url(#c50)"/><rect x="728" y="133" width="233" height="2.5" fill="url(#c51)"/><rect x="728" y="135" width="236" height="2.5" fill="url(#c52)"/><rect x="728" y="137" width="239" height="2.5" fill="url(#c53)"/><rect x="728" y="139" width="242" height="2.5" fill="url(#c54)"/><rect x="729" y="141" width="243" height="2.5" fill="url(#c55)"/><rect x="729" y="143" width="246" height="2.5" fill="url(#c56)"/><rect x="729" y="145" width="249" height="2.5" fill="url(#c57)"/><rect x="729" y="147" width="252" height="2.5" fill="url(#c58)"/><rect x="729" y="149" width="254" height="2.5" fill="url(#c59)"/><rect x="730" y="151" width="256" height="2.5" fill="url(#c60)"/><rect x="730" y="153" width="259" height="2.5" fill="url(#c61)"/><rect x="730" y="155" width="262" height="2.5" fill="url(#c62)"/><rect x="730" y="157" width="264" height="2.5" fill="url(#c63)"/><rect x="731" y="159" width="266" height="2.5" fill="url(#c64)"/><rect x="731" y="161" width="269" height="2.5" fill="url(#c65)"/><rect x="731" y="163" width="272" height="2.5" fill="url(#c66)"/><rect x="731" y="165" width="274" height="2.5" fill="url(#c67)"/><rect x="732" y="167" width="276" height="2.5" fill="url(#c68)"/><rect x="732" y="169" width="279" height="2.5" fill="url(#c69)"/><rect x="732" y="171" width="282" height="2.5" fill="url(#c70)"/><rect x="733" y="173" width="283" height="2.5" fill="url(#c71)"/><rect x="733" y="175" width="286" height="2.5" fill="url(#c72)"/><rect x="733" y="177" width="289" height="2.5" fill="url(#c73)"/><rect x="734" y="179" width="291" height="2.5" fill="url(#c74)"/><rect x="734" y="181" width="293" height="2.5" fill="url(#c75)"/><rect x="734" y="183" width="296" height="2.5" fill="url(#c76)"/><rect x="735" y="185" width="298" height="2.5" fill="url(#c77)"/><rect x="735" y="187" width="301" height="2.5" fill="url(#c78)"/><rect x="735" y="189" width="303" height="2.5" fill="url(#c79)"/><rect x="736" y="191" width="305" height="2.5" fill="url(#c80)"/><rect x="736" y="193" width="308" height="2.5" fill="url(#c81)"/><rect x="737" y="195" width="310" height="2.5" fill="url(#c82)"/><rect x="737" y="197" width="312" height="2.5" fill="url(#c83)"/><rect x="737" y="199" width="315" height="2.5" fill="url(#c84)"/><rect x="738" y="201" width="317" height="2.5" fill="url(#c85)"/><rect x="738" y="203" width="320" height="2.5" fill="url(#c86)"/><rect x="739" y="205" width="321" height="2.5" fill="url(#c87)"/><rect x="739" y="207" width="324" height="2.5" fill="url(#c88)"/><rect x="740" y="209" width="326" height="2.5" fill="url(#c89)"/><rect x="740" y="211" width="329" height="2.5" fill="url(#c90)"/><rect x="741" y="213" width="330" height="2.5" fill="url(#c91)"/><rect x="741" y="215" width="333" height="2.5" fill="url(#c92)"/><rect x="741" y="217" width="336" height="2.5" fill="url(#c93)"/><rect x="742" y="219" width="338" height="2.5" fill="url(#c94)"/><rect x="742" y="221" width="340" height="2.5" fill="url(#c95)"/><rect x="743" y="223" width="342" height="2.5" fill="url(#c96)"/><rect x="743" y="225" width="345" height="2.5" fill="url(#c97)"/><rect x="744" y="227" width="347" height="2.5" fill="url(#c98)"/><rect x="744" y="229" width="349" height="2.5" fill="url(#c99)"/><rect x="745" y="231" width="351" height="2.5" fill="url(#c100)"/><rect x="746" y="233" width="353" height="2.5" fill="url(#c101)"/><rect x="746" y="235" width="356" height="2.5" fill="url(#c102)"/><rect x="747" y="237" width="357" height="2.5" fill="url(#c103)"/><rect x="747" y="239" width="360" height="2.5" fill="url(#c104)"/><rect x="748" y="241" width="362" height="2.5" fill="url(#c105)"/><rect x="748" y="243" width="365" height="2.5" fill="url(#c106)"/><rect x="749" y="245" width="366" height="2.5" fill="url(#c107)"/><rect x="749" y="247" width="369" height="2.5" fill="url(#c108)"/><rect x="750" y="249" width="371" height="2.5" fill="url(#c109)"/><rect x="751" y="251" width="373" height="2.5" fill="url(#c110)"/><rect x="751" y="253" width="375" height="2.5" fill="url(#c111)"/><rect x="752" y="255" width="377" height="2.5" fill="url(#c112)"/><rect x="752" y="257" width="380" height="2.5" fill="url(#c113)"/><rect x="753" y="259" width="381" height="2.5" fill="url(#c114)"/><rect x="754" y="261" width="380" height="2.5" fill="url(#c115)"/><rect x="754" y="263" width="375" height="2.5" fill="url(#c116)"/><rect x="755" y="265" width="369" height="2.5" fill="url(#c117)"/><rect x="756" y="267" width="362" height="2.5" fill="url(#c118)"/><rect x="756" y="269" width="356" height="2.5" fill="url(#c119)"/><rect x="757" y="271" width="349" height="2.5" fill="url(#c120)"/><rect x="758" y="273" width="342" height="2.5" fill="url(#c121)"/><rect x="758" y="275" width="336" height="2.5" fill="url(#c122)"/><rect x="759" y="277" width="329" height="2.5" fill="url(#c123)"/><rect x="760" y="279" width="323" height="2.5" fill="url(#c124)"/><rect x="761" y="281" width="316" height="2.5" fill="url(#c125)"/><rect x="761" y="283" width="310" height="2.5" fill="url(#c126)"/><rect x="762" y="285" width="303" height="2.5" fill="url(#c127)"/><rect x="763" y="287" width="296" height="2.5" fill="url(#c128)"/><rect x="764" y="289" width="289" height="2.5" fill="url(#c129)"/><rect x="764" y="291" width="283" height="2.5" fill="url(#c130)"/><rect x="765" y="293" width="276" height="2.5" fill="url(#c131)"/><rect x="766" y="295" width="270" height="2.5" fill="url(#c132)"/><rect x="767" y="297" width="263" height="2.5" fill="url(#c133)"/><rect x="768" y="299" width="256" height="2.5" fill="url(#c134)"/><rect x="769" y="301" width="249" height="2.5" fill="url(#c135)"/><rect x="770" y="303" width="242" height="2.5" fill="url(#c136)"/><rect x="771" y="305" width="235" height="2.5" fill="url(#c137)"/><rect x="772" y="307" width="228" height="2.5" fill="url(#c138)"/><rect x="773" y="309" width="222" height="2.5" fill="url(#c139)"/><rect x="774" y="311" width="215" height="2.5" fill="url(#c140)"/><rect x="775" y="313" width="208" height="2.5" fill="url(#c141)"/><rect x="776" y="315" width="201" height="2.5" fill="url(#c142)"/><rect x="777" y="317" width="194" height="2.5" fill="url(#c143)"/><rect x="778" y="319" width="187" height="2.5" fill="url(#c144)"/><rect x="779" y="321" width="180" height="2.5" fill="url(#c145)"/><rect x="780" y="323" width="173" height="2.5" fill="url(#c146)"/><rect x="781" y="325" width="167" height="2.5" fill="url(#c147)"/><rect x="782" y="327" width="160" height="2.5" fill="url(#c148)"/><rect x="783" y="329" width="153" height="2.5" fill="url(#c149)"/><rect x="784" y="331" width="146" height="2.5" fill="url(#c150)"/><rect x="785" y="333" width="139" height="2.5" fill="url(#c151)"/><rect x="786" y="335" width="132" height="2.5" fill="url(#c152)"/><rect x="788" y="337" width="124" height="2.5" fill="url(#c153)"/><rect x="789" y="339" width="118" height="2.5" fill="url(#c154)"/><rect x="790" y="341" width="111" height="2.5" fill="url(#c155)"/><rect x="792" y="343" width="103" height="2.5" fill="url(#c156)"/><rect x="793" y="345" width="96" height="2.5" fill="url(#c157)"/><rect x="795" y="347" width="88" height="2.5" fill="url(#c158)"/><rect x="797" y="349" width="80" height="2.5" fill="url(#c159)"/><rect x="798" y="351" width="73" height="2.5" fill="url(#c160)"/><rect x="800" y="353" width="65" height="2.5" fill="url(#c161)"/><rect x="802" y="355" width="58" height="2.5" fill="url(#c162)"/><rect x="805" y="357" width="49" height="2.5" fill="url(#c163)"/><rect x="808" y="359" width="40" height="2.5" fill="url(#c164)"/><rect x="811" y="361" width="31" height="2.5" fill="url(#c165)"/><rect x="814" y="363" width="22" height="2.5" fill="url(#c166)"/><rect x="817" y="365" width="13" height="2.5" fill="url(#c167)"/></g></g>
<g><rect x="1026" y="31" width="164" height="3.5" fill="url(#i0)"/><rect x="1026" y="34" width="164" height="3.5" fill="url(#i1)"/><rect x="1026" y="37" width="164" height="3.5" fill="url(#i2)"/><rect x="1026" y="40" width="164" height="3.5" fill="url(#i3)"/><rect x="1026" y="43" width="164" height="3.5" fill="url(#i4)"/><rect x="1026" y="46" width="164" height="3.5" fill="url(#i5)"/><rect x="1026" y="49" width="164" height="3.5" fill="url(#i6)"/><rect x="1026" y="52" width="164" height="3.5" fill="url(#i7)"/><rect x="1026" y="55" width="164" height="3.5" fill="url(#i8)"/><rect x="1026" y="58" width="164" height="3.5" fill="url(#i9)"/><rect x="1026" y="61" width="164" height="3.5" fill="url(#i10)"/><rect x="1026" y="64" width="164" height="3.5" fill="url(#i11)"/><rect x="1026" y="67" width="164" height="3.5" fill="url(#i12)"/><rect x="1026" y="70" width="164" height="3.5" fill="url(#i13)"/><rect x="1026" y="73" width="164" height="3.5" fill="url(#i14)"/><rect x="1026" y="76" width="164" height="3.5" fill="url(#i15)"/><rect x="1026" y="79" width="164" height="3.5" fill="url(#i16)"/><rect x="1026" y="82" width="164" height="3.5" fill="url(#i17)"/><rect x="1026" y="85" width="164" height="3.5" fill="url(#i18)"/><rect x="1026" y="88" width="164" height="3.5" fill="url(#i19)"/><rect x="1026" y="91" width="164" height="3.5" fill="url(#i20)"/><rect x="1026" y="94" width="164" height="3.5" fill="url(#i21)"/><rect x="1026" y="97" width="164" height="3.5" fill="url(#i22)"/><rect x="1026" y="100" width="164" height="3.5" fill="url(#i23)"/><rect x="1026" y="103" width="164" height="3.5" fill="url(#i24)"/><rect x="1026" y="106" width="164" height="3.5" fill="url(#i25)"/><rect x="1026" y="109" width="164" height="3.5" fill="url(#i26)"/><rect x="1026" y="112" width="164" height="3.5" fill="url(#i27)"/><rect x="1026" y="115" width="164" height="3.5" fill="url(#i28)"/><rect x="1026" y="118" width="164" height="3.5" fill="url(#i29)"/><rect x="1026" y="121" width="164" height="3.5" fill="url(#i30)"/><rect x="1026" y="124" width="164" height="3.5" fill="url(#i31)"/><rect x="1026" y="127" width="164" height="3.5" fill="url(#i32)"/><rect x="1026" y="130" width="164" height="3.5" fill="url(#i33)"/><rect x="1026" y="133" width="164" height="3.5" fill="url(#i34)"/><rect x="1026" y="136" width="164" height="3.5" fill="url(#i35)"/><rect x="1026" y="139" width="164" height="3.5" fill="url(#i36)"/><rect x="1026" y="142" width="164" height="3.5" fill="url(#i37)"/><rect x="1026" y="145" width="164" height="3.5" fill="url(#i38)"/><rect x="1026" y="148" width="164" height="3.5" fill="url(#i39)"/><rect x="1026" y="151" width="164" height="3.5" fill="url(#i40)"/></g>
<rect x="1026.5" y="31" width="163" height="123" fill="none" stroke="#8a8a8a" stroke-width="1.2"/>
<rect x="1103.65" y="87.65" width="9.5" height="9.5" fill="#fff" stroke="#484848" stroke-width="1.6"/>
<circle cx="1059.4" cy="115" r="2.8" fill="#fff" stroke="#303030" stroke-width="1.3"/>
<line x1="727" y1="29.5" x2="1192" y2="29.5" stroke="#8e8e8e" stroke-width="1"/>
<line x1="727" y1="369.6" x2="1192" y2="369.6" stroke="#8e8e8e" stroke-width="1.2"/>
<line x1="727" y1="29.5" x2="727" y2="369.6" stroke="#8e8e8e" stroke-width="1.2"/>
<line x1="1192" y1="29.5" x2="1192" y2="369.6" stroke="#6e6e6e" stroke-width="1"/>
<line x1="723" y1="370.2" x2="727" y2="370.2" stroke="#8e8e8e" stroke-width="1"/>
<text x="722.2" y="373.8" font-size="10.2" text-anchor="end" fill="#e8e8e8">0</text>
<line x1="726" y1="368.6" x2="726" y2="372.6" stroke="#8e8e8e" stroke-width="1"/>
<text x="726" y="383.8" font-size="10.2" text-anchor="middle" fill="#e8e8e8">0</text>
<line x1="723" y1="329.85" x2="727" y2="329.85" stroke="#8e8e8e" stroke-width="1"/>
<text x="722.2" y="333.45" font-size="10.2" text-anchor="end" textLength="14.4" lengthAdjust="spacingAndGlyphs" fill="#e8e8e8">0.1</text>
<line x1="781.43" y1="368.6" x2="781.43" y2="372.6" stroke="#8e8e8e" stroke-width="1"/>
<text x="781.43" y="383.8" font-size="10.2" text-anchor="middle" textLength="14.4" lengthAdjust="spacingAndGlyphs" fill="#e8e8e8">0.1</text>
<line x1="723" y1="289.5" x2="727" y2="289.5" stroke="#8e8e8e" stroke-width="1"/>
<text x="722.2" y="293.1" font-size="10.2" text-anchor="end" textLength="14.4" lengthAdjust="spacingAndGlyphs" fill="#e8e8e8">0.2</text>
<line x1="836.86" y1="368.6" x2="836.86" y2="372.6" stroke="#8e8e8e" stroke-width="1"/>
<text x="836.86" y="383.8" font-size="10.2" text-anchor="middle" textLength="14.4" lengthAdjust="spacingAndGlyphs" fill="#e8e8e8">0.2</text>
<line x1="723" y1="249.15" x2="727" y2="249.15" stroke="#8e8e8e" stroke-width="1"/>
<text x="722.2" y="252.75" font-size="10.2" text-anchor="end" textLength="14.4" lengthAdjust="spacingAndGlyphs" fill="#e8e8e8">0.3</text>
<line x1="892.29" y1="368.6" x2="892.29" y2="372.6" stroke="#8e8e8e" stroke-width="1"/>
<text x="892.29" y="383.8" font-size="10.2" text-anchor="middle" textLength="14.4" lengthAdjust="spacingAndGlyphs" fill="#e8e8e8">0.3</text>
<line x1="723" y1="208.8" x2="727" y2="208.8" stroke="#8e8e8e" stroke-width="1"/>
<text x="722.2" y="212.4" font-size="10.2" text-anchor="end" textLength="14.4" lengthAdjust="spacingAndGlyphs" fill="#e8e8e8">0.4</text>
<line x1="947.72" y1="368.6" x2="947.72" y2="372.6" stroke="#8e8e8e" stroke-width="1"/>
<text x="947.72" y="383.8" font-size="10.2" text-anchor="middle" textLength="14.4" lengthAdjust="spacingAndGlyphs" fill="#e8e8e8">0.4</text>
<line x1="723" y1="168.45" x2="727" y2="168.45" stroke="#8e8e8e" stroke-width="1"/>
<text x="722.2" y="172.05" font-size="10.2" text-anchor="end" textLength="14.4" lengthAdjust="spacingAndGlyphs" fill="#e8e8e8">0.5</text>
<line x1="1003.15" y1="368.6" x2="1003.15" y2="372.6" stroke="#8e8e8e" stroke-width="1"/>
<text x="1003.15" y="383.8" font-size="10.2" text-anchor="middle" textLength="14.4" lengthAdjust="spacingAndGlyphs" fill="#e8e8e8">0.5</text>
<line x1="723" y1="128.1" x2="727" y2="128.1" stroke="#8e8e8e" stroke-width="1"/>
<text x="722.2" y="131.7" font-size="10.2" text-anchor="end" textLength="14.4" lengthAdjust="spacingAndGlyphs" fill="#e8e8e8">0.6</text>
<line x1="1058.58" y1="368.6" x2="1058.58" y2="372.6" stroke="#8e8e8e" stroke-width="1"/>
<text x="1058.58" y="383.8" font-size="10.2" text-anchor="middle" textLength="14.4" lengthAdjust="spacingAndGlyphs" fill="#e8e8e8">0.6</text>
<line x1="723" y1="87.75" x2="727" y2="87.75" stroke="#8e8e8e" stroke-width="1"/>
<text x="722.2" y="91.35" font-size="10.2" text-anchor="end" textLength="14.4" lengthAdjust="spacingAndGlyphs" fill="#e8e8e8">0.7</text>
<line x1="1114.01" y1="368.6" x2="1114.01" y2="372.6" stroke="#8e8e8e" stroke-width="1"/>
<text x="1114.01" y="383.8" font-size="10.2" text-anchor="middle" textLength="14.4" lengthAdjust="spacingAndGlyphs" fill="#e8e8e8">0.7</text>
<line x1="723" y1="47.4" x2="727" y2="47.4" stroke="#8e8e8e" stroke-width="1"/>
<text x="722.2" y="51" font-size="10.2" text-anchor="end" textLength="14.4" lengthAdjust="spacingAndGlyphs" fill="#e8e8e8">0.8</text>
<line x1="1169.44" y1="368.6" x2="1169.44" y2="372.6" stroke="#8e8e8e" stroke-width="1"/>
<text x="1169.44" y="383.8" font-size="10.2" text-anchor="middle" textLength="14.4" lengthAdjust="spacingAndGlyphs" fill="#e8e8e8">0.8</text>
<text x="949.6" y="26" font-size="10.3" text-anchor="middle" textLength="54.2" lengthAdjust="spacingAndGlyphs" fill="#e8e8e8">CIE 1931 xy</text>
<rect x="895.25" y="231.25" width="9.5" height="9.5" fill="#f4f4f4" stroke="#2c2c2c" stroke-width="1.6"/>
<circle cx="890.4" cy="239.4" r="3" fill="#fff" stroke="#202020" stroke-width="1.4"/>
<rect x="1098.4" y="234.6" width="10" height="10" fill="#000" stroke="#f0f0f0" stroke-width="1.3" fill-opacity="0.4"/>
<circle cx="1093.4" cy="236.2" r="2.6" fill="none" stroke="#e0142c" stroke-width="1.1"/>
<rect x="868.442" y="84.95" width="10" height="10" fill="#000" stroke="#e8ffe8" stroke-width="1.3" fill-opacity="0.3"/>
<circle cx="878.987" cy="100.363" r="3" fill="none" stroke="#0a3a0a" stroke-width="1.3"/>
<rect x="803.6" y="339.4" width="10" height="10" fill="none" stroke="#dcdcff" stroke-width="1.4"/>
<rect x="832.1" y="230.1" width="8.6" height="8.6" fill="none" stroke="#eaffff" stroke-width="1.3"/>
<circle cx="842.2" cy="234.4" r="2.8" fill="none" stroke="#063c3c" stroke-width="1.2"/>
<rect x="907.4" y="302.6" width="10" height="10" fill="none" stroke="#ffd8ff" stroke-width="1.3"/>
<circle cx="903.8" cy="308.4" r="2.6" fill="none" stroke="#a020a0" stroke-width="1"/>
<rect x="964.6" y="148" width="10" height="10" fill="none" stroke="#ffffc8" stroke-width="1.3"/>
<circle cx="951.4" cy="146.6" r="3" fill="none" stroke="#1e1e00" stroke-width="1.3"/>
<rect x="701" y="393" width="499" height="147" fill="#141414"/>
<rect x="711" y="393.6" width="470" height="25.8" fill="url(#gH)"/>
<g clip-path="url(#cpTab)">
<text x="772.5" y="412.8" font-size="13.4" textLength="30.1" lengthAdjust="spacingAndGlyphs" fill="#e4e4e4">White</text>
<text x="833.6" y="412.8" font-size="13.4" textLength="19.2" lengthAdjust="spacingAndGlyphs" fill="#e4e4e4">Red</text>
<text x="894.8" y="412.8" font-size="13.4" textLength="30.7" lengthAdjust="spacingAndGlyphs" fill="#e4e4e4">Green</text>
<text x="956.3" y="412.8" font-size="13.4" textLength="21.5" lengthAdjust="spacingAndGlyphs" fill="#e4e4e4">Blue</text>
<text x="1017.5" y="412.8" font-size="13.4" textLength="23.8" lengthAdjust="spacingAndGlyphs" fill="#e4e4e4">Cyan</text>
<text x="1079" y="412.8" font-size="13.4" textLength="43.6" lengthAdjust="spacingAndGlyphs" fill="#e4e4e4">Magenta</text>
<text x="1140.2" y="412.8" font-size="13.4" textLength="31.6" lengthAdjust="spacingAndGlyphs" fill="#e4e4e4">Yellow</text>
<rect x="711" y="419.4" width="470" height="24.3" fill="#363636"/>
<text x="715.2" y="437.25" font-size="15.8" textLength="8.3" lengthAdjust="spacingAndGlyphs" fill="#f2f2f2">X</text>
<text x="772.5" y="437.25" font-size="15.8" textLength="53.31" lengthAdjust="spacingAndGlyphs" fill="#f2f2f2">371.9234</text>
<text x="833.6" y="437.25" font-size="15.8" textLength="53.31" lengthAdjust="spacingAndGlyphs" fill="#f2f2f2">165.6402</text>
<text x="894.8" y="437.25" font-size="15.8" textLength="53.31" lengthAdjust="spacingAndGlyphs" fill="#f2f2f2">100.4313</text>
<text x="956.3" y="437.25" font-size="15.8" textLength="46.18" lengthAdjust="spacingAndGlyphs" fill="#f2f2f2">81.9942</text>
<text x="1017.5" y="437.25" font-size="15.8" textLength="53.31" lengthAdjust="spacingAndGlyphs" fill="#f2f2f2">175.3413</text>
<text x="1079" y="437.25" font-size="15.8" textLength="53.31" lengthAdjust="spacingAndGlyphs" fill="#f2f2f2">246.5484</text>
<text x="1140.2" y="437.25" font-size="15.8" textLength="53.31" lengthAdjust="spacingAndGlyphs" fill="#f2f2f2">228.9912</text>
<rect x="711" y="443.7" width="470" height="22.6" fill="#696969"/>
<text x="715.2" y="460.7" font-size="15.8" textLength="46.5" lengthAdjust="spacingAndGlyphs" fill="#f2f2f2">Y cd/m²</text>
<text x="772.5" y="460.7" font-size="15.8" textLength="53.31" lengthAdjust="spacingAndGlyphs" fill="#f2f2f2">399.5164</text>
<text x="833.6" y="460.7" font-size="15.8" textLength="46.18" lengthAdjust="spacingAndGlyphs" fill="#f2f2f2">81.9741</text>
<text x="894.8" y="460.7" font-size="15.8" textLength="53.31" lengthAdjust="spacingAndGlyphs" fill="#f2f2f2">242.2401</text>
<text x="956.3" y="460.7" font-size="15.8" textLength="46.18" lengthAdjust="spacingAndGlyphs" fill="#f2f2f2">34.2970</text>
<text x="1017.5" y="460.7" font-size="15.8" textLength="53.31" lengthAdjust="spacingAndGlyphs" fill="#f2f2f2">280.9198</text>
<text x="1079" y="460.7" font-size="15.8" textLength="53.31" lengthAdjust="spacingAndGlyphs" fill="#f2f2f2">115.5290</text>
<text x="1140.2" y="460.7" font-size="15.8" textLength="53.31" lengthAdjust="spacingAndGlyphs" fill="#f2f2f2">310.6034</text>
<rect x="711" y="466.3" width="470" height="24.1" fill="#363636"/>
<text x="715.2" y="484.05" font-size="15.8" textLength="7.2" lengthAdjust="spacingAndGlyphs" fill="#f2f2f2">Z</text>
<text x="772.5" y="484.05" font-size="15.8" textLength="53.31" lengthAdjust="spacingAndGlyphs" fill="#f2f2f2">477.2982</text>
<text x="833.6" y="484.05" font-size="15.8" textLength="39.05" lengthAdjust="spacingAndGlyphs" fill="#f2f2f2">2.0788</text>
<text x="894.8" y="484.05" font-size="15.8" textLength="46.18" lengthAdjust="spacingAndGlyphs" fill="#f2f2f2">22.5491</text>
<text x="956.3" y="484.05" font-size="15.8" textLength="53.31" lengthAdjust="spacingAndGlyphs" fill="#f2f2f2">414.3195</text>
<text x="1017.5" y="484.05" font-size="15.8" textLength="53.31" lengthAdjust="spacingAndGlyphs" fill="#f2f2f2">386.5094</text>
<text x="1079" y="484.05" font-size="15.8" textLength="53.31" lengthAdjust="spacingAndGlyphs" fill="#f2f2f2">406.6984</text>
<text x="1140.2" y="484.05" font-size="15.8" textLength="46.18" lengthAdjust="spacingAndGlyphs" fill="#f2f2f2">24.3208</text>
<rect x="711" y="490.4" width="470" height="21.5" fill="#696969"/>
<text x="715.2" y="506.85" font-size="15.8" textLength="45" lengthAdjust="spacingAndGlyphs" fill="#f2f2f2">x: CIE31</text>
<text x="772.5" y="506.85" font-size="15.8" textLength="39.05" lengthAdjust="spacingAndGlyphs" fill="#f2f2f2">0.2978</text>
<text x="833.6" y="506.85" font-size="15.8" textLength="39.05" lengthAdjust="spacingAndGlyphs" fill="#f2f2f2">0.6634</text>
<text x="894.8" y="506.85" font-size="15.8" textLength="39.05" lengthAdjust="spacingAndGlyphs" fill="#f2f2f2">0.2750</text>
<text x="956.3" y="506.85" font-size="15.8" textLength="39.05" lengthAdjust="spacingAndGlyphs" fill="#f2f2f2">0.1545</text>
<text x="1017.5" y="506.85" font-size="15.8" textLength="39.05" lengthAdjust="spacingAndGlyphs" fill="#f2f2f2">0.2081</text>
<text x="1079" y="506.85" font-size="15.8" textLength="39.05" lengthAdjust="spacingAndGlyphs" fill="#f2f2f2">0.3207</text>
<text x="1140.2" y="506.85" font-size="15.8" textLength="39.05" lengthAdjust="spacingAndGlyphs" fill="#f2f2f2">0.4061</text>
<rect x="711" y="511.9" width="470" height="21.3" fill="#363636"/>
<text x="715.2" y="528.25" font-size="15.8" textLength="45" lengthAdjust="spacingAndGlyphs" fill="#f2f2f2">y: CIE31</text>
<text x="772.5" y="528.25" font-size="15.8" textLength="39.05" lengthAdjust="spacingAndGlyphs" fill="#f2f2f2">0.3199</text>
<text x="833.6" y="528.25" font-size="15.8" textLength="39.05" lengthAdjust="spacingAndGlyphs" fill="#f2f2f2">0.3283</text>
<text x="894.8" y="528.25" font-size="15.8" textLength="39.05" lengthAdjust="spacingAndGlyphs" fill="#f2f2f2">0.6633</text>
<text x="956.3" y="528.25" font-size="15.8" textLength="39.05" lengthAdjust="spacingAndGlyphs" fill="#f2f2f2">0.0646</text>
<text x="1017.5" y="528.25" font-size="15.8" textLength="39.05" lengthAdjust="spacingAndGlyphs" fill="#f2f2f2">0.3333</text>
<text x="1079" y="528.25" font-size="15.8" textLength="39.05" lengthAdjust="spacingAndGlyphs" fill="#f2f2f2">0.1503</text>
<text x="1140.2" y="528.25" font-size="15.8" textLength="39.05" lengthAdjust="spacingAndGlyphs" fill="#f2f2f2">0.5508</text>
</g>
<rect x="701" y="393" width="10.5" height="27" fill="#000"/>
<rect x="701" y="420" width="10.5" height="120" fill="#272727"/>
<line x1="701" y1="443.7" x2="711.5" y2="443.7" stroke="#161616" stroke-width="1"/>
<line x1="701" y1="466.3" x2="711.5" y2="466.3" stroke="#161616" stroke-width="1"/>
<line x1="701" y1="490.4" x2="711.5" y2="490.4" stroke="#161616" stroke-width="1"/>
<line x1="701" y1="511.9" x2="711.5" y2="511.9" stroke="#161616" stroke-width="1"/>
<line x1="701" y1="533.2" x2="711.5" y2="533.2" stroke="#161616" stroke-width="1"/>
<rect x="1181" y="393.6" width="13" height="27" fill="#2a2a2a"/>
<rect x="1181" y="420.6" width="12.2" height="112.6" fill="#5c5c5c"/>
<rect x="1181" y="420.6" width="12.2" height="14.6" fill="#707070"/>
<rect x="1181" y="515.4" width="12.2" height="14.6" fill="#707070"/>
<rect x="1182" y="436.6" width="10.4" height="36" fill="#444"/>
<path d="M1183.4 431l3.8-5.2 3.8 5.2z" fill="#3a3a3a"/>
<path d="M1183.4 519.8l3.8 5.4 3.8-5.4z" fill="#3a3a3a"/>
<rect x="711" y="533.3" width="470" height="6.7" fill="#666"/>
<rect x="727" y="533.8" width="373" height="6.2" fill="#474747"/>
<path d="M720.5 534.6l-3.6 3 3.6 3z" fill="#bbb"/>
<rect x="1181" y="533.3" width="13" height="6.7" fill="#3c3c3c"/>
<rect x="1011.2" y="496.3" width="24.2" height="23" rx="4.2" fill="#ff8614"/>
<path d="M1033.5 498c-5.200 1.500-9.300 5-9.300 8.300 0 2.800 5.400 3.600 5.700 6.600.3 2.900-3.600 5.300-7.600 5.900" fill="none" stroke="#444" stroke-opacity=".9" stroke-width="3.600" stroke-linecap="round"/>
<text x="1041.5" y="516.8" font-size="23.4" textLength="136.5" lengthAdjust="spacingAndGlyphs" fill="#1c1c1c" fill-opacity=".8">Soomal.com</text></svg></body></html>
